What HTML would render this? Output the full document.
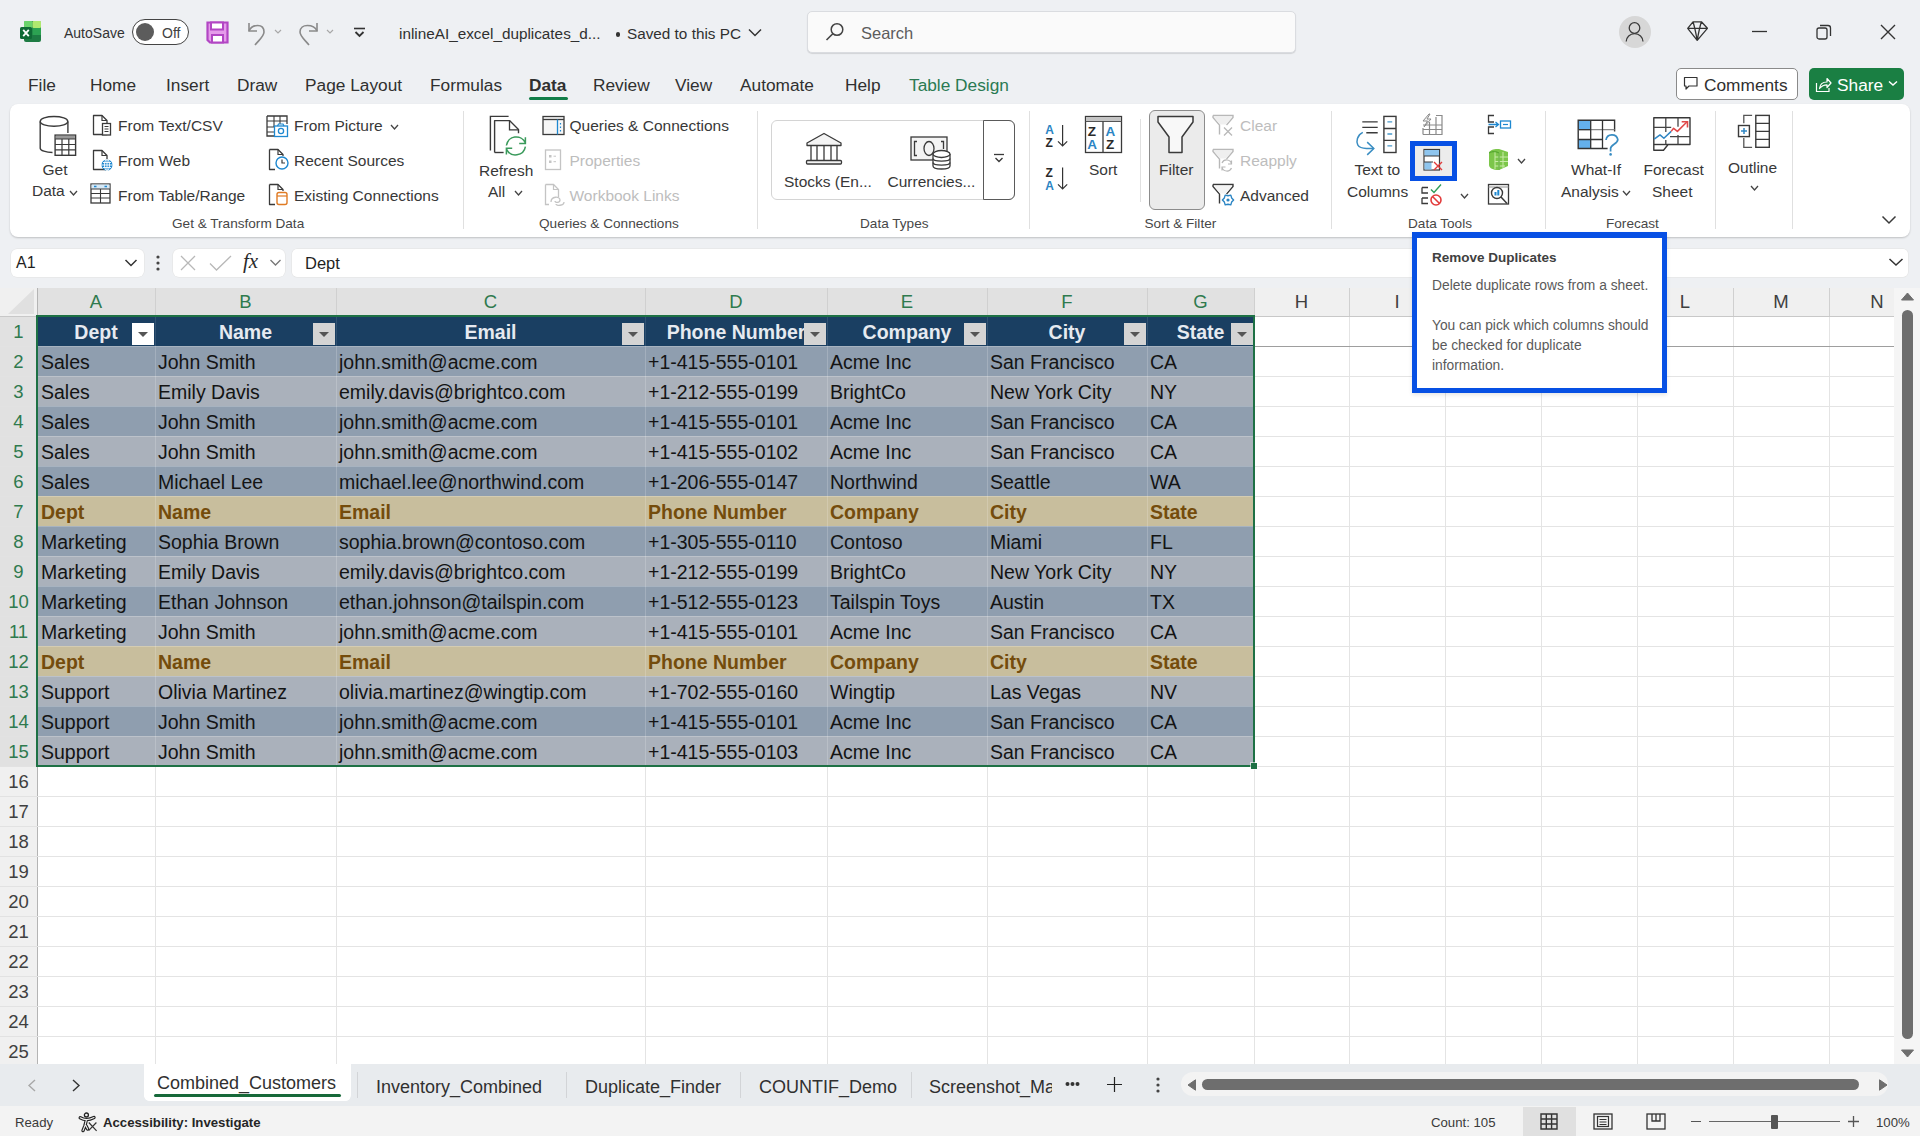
<!DOCTYPE html><html><head><meta charset="utf-8"><style>
*{margin:0;padding:0;box-sizing:border-box}
html,body{width:1920px;height:1136px;overflow:hidden;background:#EEF0F3;font-family:"Liberation Sans",sans-serif;color:#242424}
.a{position:absolute;white-space:nowrap}
svg{position:absolute;overflow:visible}
</style></head><body>

<svg style="left:20px;top:21px;" width="22" height="22" viewBox="0 0 22 22">
<rect x="4" y="0" width="17" height="21" rx="2" fill="#1D7B43"/>
<rect x="4" y="0" width="8.5" height="7" rx="1" fill="#6BD36C"/>
<rect x="12.5" y="0" width="8.5" height="7" rx="1" fill="#B0E96F"/>
<rect x="12.5" y="7" width="8.5" height="7" fill="#2CA252"/>
<rect x="0" y="6" width="12" height="12" rx="1.5" fill="#0F6A35"/>
<path d="M3.2 8.8 L8.8 15.2 M8.8 8.8 L3.2 15.2" stroke="#fff" stroke-width="1.8"/>
</svg>
<div class="a" style="left:64px;top:26px;font-size:14px;line-height:14px;color:#333333;font-weight:normal;">AutoSave</div>
<div class="a" style="left:132px;top:19px;width:57px;height:26px;border:1.5px solid #444;border-radius:13px;background:#fff"></div>
<div class="a" style="left:136px;top:23px;width:18px;height:18px;border-radius:9px;background:#5c5c5c"></div>
<div class="a" style="left:162px;top:26px;font-size:14px;line-height:14px;color:#424242;font-weight:normal;">Off</div>
<svg style="left:206px;top:21px;" width="24" height="24" viewBox="0 0 24 24">
<path d="M1.5 1.5 H21.5 V21.5 H4 L1.5 19 Z" fill="#E59CEA" stroke="#B246C4" stroke-width="2.2"/>
<rect x="5" y="1.5" width="12" height="7" fill="#fff" stroke="#B246C4" stroke-width="2"/>
<rect x="6" y="14" width="11" height="7.5" fill="#fff" stroke="#B246C4" stroke-width="2"/>
</svg>
<svg style="left:246px;top:20px;" width="24" height="26" viewBox="0 0 24 26"><path d="M3 3 V11 H11" fill="none" stroke="#8a8a8a" stroke-width="1.6"/><path d="M3 11 C6 4 18 3 18 12 C18 16 14 19 9 25" fill="none" stroke="#8a8a8a" stroke-width="1.6"/></svg>
<svg style="left:274px;top:29px;" width="8" height="6" viewBox="0 0 8 6"><path d="M1 1 L4 4 L7 1" fill="none" stroke="#a8a8a8" stroke-width="1.2"/></svg>
<svg style="left:298px;top:20px;" width="24" height="26" viewBox="0 0 24 26"><path d="M19 3 V11 H11" fill="none" stroke="#8a8a8a" stroke-width="1.6"/><path d="M19 11 C16 4 2 3 2 12 C2 16 6 19 11 25" fill="none" stroke="#8a8a8a" stroke-width="1.6"/></svg>
<svg style="left:326px;top:29px;" width="8" height="6" viewBox="0 0 8 6"><path d="M1 1 L4 4 L7 1" fill="none" stroke="#a8a8a8" stroke-width="1.2"/></svg>
<svg style="left:353px;top:27px;" width="14" height="12" viewBox="0 0 14 12"><path d="M1 1.5 H12" stroke="#333" stroke-width="1.6"/><path d="M2.5 5 L6.5 9 L10.5 5" fill="none" stroke="#333" stroke-width="1.8"/></svg>
<div class="a" style="left:399px;top:26px;font-size:15.3px;line-height:15.3px;color:#303030;font-weight:normal;">inlineAI_excel_duplicates_d...</div>
<div class="a" style="left:615.5px;top:32px;width:4.5px;height:4.5px;border-radius:3px;background:#333"></div>
<div class="a" style="left:627px;top:26px;font-size:15.3px;line-height:15.3px;color:#303030;font-weight:normal;">Saved to this PC</div>
<svg style="left:748px;top:28px;" width="14" height="10" viewBox="0 0 14 10"><path d="M1 1.5 L7 7.5 L13 1.5" fill="none" stroke="#333" stroke-width="1.5"/></svg>
<div class="a" style="left:807px;top:11px;width:489px;height:42px;background:#FAFAFA;border:1px solid #DADCE0;border-radius:5px;box-shadow:0 1px 1px rgba(0,0,0,0.12)"></div>
<svg style="left:825px;top:22px;" width="20" height="20" viewBox="0 0 20 20"><circle cx="12" cy="7.5" r="5.8" fill="none" stroke="#444" stroke-width="1.5"/><path d="M7.8 11.7 L1.5 18" stroke="#444" stroke-width="1.6"/></svg>
<div class="a" style="left:861px;top:25px;font-size:16.5px;line-height:16.5px;color:#5c5c5c;font-weight:normal;">Search</div>
<div class="a" style="left:1619px;top:16px;width:32px;height:32px;border-radius:16px;background:#D7D7D7"></div>
<svg style="left:1625px;top:22px;" width="20" height="20" viewBox="0 0 20 20"><circle cx="9.5" cy="6" r="5.3" fill="none" stroke="#3a3a3a" stroke-width="1.25"/><path d="M1.2 19.6 A8.4 8 0 0 1 18 19.6" fill="none" stroke="#3a3a3a" stroke-width="1.25"/></svg>
<svg style="left:1687px;top:21px;" width="22" height="21" viewBox="0 0 22 21"><path d="M0.7 7.3 L6 0.8 H14.4 L20.4 7.3 L10.2 19.4 Z M0.7 7.3 H20.4 M6 0.8 Q8 7 10.2 19.4 M14.4 0.8 Q12.4 7 10.2 19.4" fill="none" stroke="#333" stroke-width="1.3" stroke-linejoin="round"/></svg>
<svg style="left:1752px;top:30px;" width="16" height="3" viewBox="0 0 16 3"><path d="M0 1.5 H15" stroke="#333" stroke-width="1.3"/></svg>
<svg style="left:1816px;top:24px;" width="16" height="16" viewBox="0 0 16 16"><rect x="1" y="4" width="10" height="11" rx="2" fill="none" stroke="#333" stroke-width="1.3"/><path d="M4 1.5 H12 Q14.5 1.5 14.5 4 V12" fill="none" stroke="#333" stroke-width="1.3"/></svg>
<svg style="left:1880px;top:24px;" width="16" height="16" viewBox="0 0 16 16"><path d="M1 1 L15 15 M15 1 L1 15" stroke="#333" stroke-width="1.4"/></svg>
<div class="a" style="left:28px;top:77px;font-size:17.3px;line-height:17.3px;color:#303030;font-weight:normal;">File</div>
<div class="a" style="left:90px;top:77px;font-size:17.3px;line-height:17.3px;color:#303030;font-weight:normal;">Home</div>
<div class="a" style="left:166px;top:77px;font-size:17.3px;line-height:17.3px;color:#303030;font-weight:normal;">Insert</div>
<div class="a" style="left:237px;top:77px;font-size:17.3px;line-height:17.3px;color:#303030;font-weight:normal;">Draw</div>
<div class="a" style="left:305px;top:77px;font-size:17.3px;line-height:17.3px;color:#303030;font-weight:normal;">Page Layout</div>
<div class="a" style="left:430px;top:77px;font-size:17.3px;line-height:17.3px;color:#303030;font-weight:normal;">Formulas</div>
<div class="a" style="left:529px;top:77px;font-size:17.3px;line-height:17.3px;color:#303030;font-weight:bold;">Data</div>
<div class="a" style="left:593px;top:77px;font-size:17.3px;line-height:17.3px;color:#303030;font-weight:normal;">Review</div>
<div class="a" style="left:675px;top:77px;font-size:17.3px;line-height:17.3px;color:#303030;font-weight:normal;">View</div>
<div class="a" style="left:740px;top:77px;font-size:17.3px;line-height:17.3px;color:#303030;font-weight:normal;">Automate</div>
<div class="a" style="left:845px;top:77px;font-size:17.3px;line-height:17.3px;color:#303030;font-weight:normal;">Help</div>
<div class="a" style="left:909px;top:77px;font-size:17.3px;line-height:17.3px;color:#2A7A52;font-weight:normal;">Table Design</div>
<div class="a" style="left:529px;top:97px;width:39px;height:3px;background:#117D48;border-radius:2px"></div>
<div class="a" style="left:1676px;top:68px;width:122px;height:32px;border:1px solid #8a8a8a;border-radius:5px;background:#fff"></div>
<svg style="left:1683px;top:76px;" width="16" height="16" viewBox="0 0 16 16"><path d="M1.5 1.5 H14 V10 H6 L3 13 V10 H1.5 Z" fill="none" stroke="#333" stroke-width="1.2" stroke-linejoin="round"/></svg>
<div class="a" style="left:1704px;top:76.5px;font-size:17.3px;line-height:17.3px;color:#303030;font-weight:normal;">Comments</div>
<div class="a" style="left:1809px;top:68px;width:95px;height:32px;border-radius:5px;background:#1A7F43"></div>
<svg style="left:1815px;top:75px;" width="17" height="18" viewBox="0 0 17 18"><path d="M1.5 8 V16.5 H14 V13" fill="none" stroke="#fff" stroke-width="1.2"/><path d="M4.5 13.5 C5 9 8 7 12 7 V3.5 L16 8 L12 12.5 V9.8 C9 9.8 6.5 11 4.5 13.5 Z" fill="none" stroke="#fff" stroke-width="1.2" stroke-linejoin="round"/></svg>
<div class="a" style="left:1837px;top:76.5px;font-size:17.3px;line-height:17.3px;color:#fff;font-weight:normal;">Share</div>
<svg style="left:1888px;top:80px;" width="10" height="7" viewBox="0 0 10 7"><path d="M1 1.5 L5 5 L9 1.5" fill="none" stroke="#fff" stroke-width="1.5"/></svg>
<div class="a" style="left:10px;top:104px;width:1900px;height:133px;background:#fff;border-radius:8px;box-shadow:0 1px 2px rgba(0,0,0,0.20)"></div>
<svg style="left:38px;top:114px;" width="40" height="44" viewBox="0 0 40 44">
<path d="M2.2 7.4 V34.2 C2.2 36.5 8 38.5 14.5 38.5" fill="#fff" stroke="#3a3a3a" stroke-width="1.4"/>
<path d="M29.9 7.4 V18.9" fill="none" stroke="#3a3a3a" stroke-width="1.4"/>
<ellipse cx="16" cy="7.4" rx="13.8" ry="4.9" fill="#fff" stroke="#3a3a3a" stroke-width="1.4"/>
<rect x="17.1" y="21.1" width="20.5" height="20.2" fill="#fff" stroke="#3a3a3a" stroke-width="1.4"/>
<rect x="17.8" y="21.8" width="19.1" height="3.2" fill="#999"/>
<path d="M17.1 25 H37.6 M17.1 30.5 H37.6 M17.1 35.8 H37.6 M24 25 V41.3 M30.8 25 V41.3" stroke="#3a3a3a" stroke-width="1.2"/>
</svg>
<div class="a" style="left:42.5px;top:162.0px;font-size:15.5px;line-height:15.5px;color:#383838;font-weight:normal;">Get</div>
<div class="a" style="left:32px;top:183.0px;font-size:15.5px;line-height:15.5px;color:#383838;font-weight:normal;">Data</div>
<svg style="left:69px;top:190px;" width="9" height="6" viewBox="0 0 9 6"><path d="M1 1 L4.5 5 L8 1" fill="none" stroke="#444" stroke-width="1.3"/></svg>
<svg style="left:92px;top:114px;" width="22" height="24" viewBox="0 0 22 24"><path d="M1.5 1.5 H10 L15 6.5 V20.5 H1.5 Z" fill="#fff" stroke="#3a3a3a" stroke-width="1.3" stroke-linejoin="round"/><path d="M10 1.5 V6.5 H15" fill="none" stroke="#3a3a3a" stroke-width="1.2"/><rect x="10.5" y="9.5" width="8" height="11.5" fill="#fff" stroke="#3a3a3a" stroke-width="1.3"/><path d="M12.5 12.5 H16.5 M12.5 15 H16.5 M12.5 17.5 H16.5" stroke="#3a3a3a" stroke-width="1"/></svg>
<div class="a" style="left:118px;top:117.5px;font-size:15.5px;line-height:15.5px;color:#383838;font-weight:normal;">From Text/CSV</div>
<svg style="left:92px;top:149px;" width="22" height="24" viewBox="0 0 22 24"><path d="M1.5 1.5 H10 L15 6.5 V20.5 H1.5 Z" fill="#fff" stroke="#3a3a3a" stroke-width="1.3" stroke-linejoin="round"/><path d="M10 1.5 V6.5 H15" fill="none" stroke="#3a3a3a" stroke-width="1.2"/><circle cx="15" cy="16" r="5.5" fill="#1E88D0"/><path d="M9.5 16 H20.5 M15 10.5 V21.5 M11 13.5 H19 M11 18.5 H19" stroke="#fff" stroke-width="0.9"/><ellipse cx="15" cy="16" rx="2.5" ry="5.5" fill="none" stroke="#fff" stroke-width="0.9"/></svg>
<div class="a" style="left:118px;top:152.5px;font-size:15.5px;line-height:15.5px;color:#383838;font-weight:normal;">From Web</div>
<svg style="left:90px;top:183px;" width="22" height="22" viewBox="0 0 22 22"><rect x="1" y="1" width="19" height="19" fill="#fff" stroke="#3a3a3a" stroke-width="1.3"/><rect x="1.5" y="1.5" width="18" height="4.5" fill="#D6E9F7"/>
<path d="M1 6 H20 M1 10.5 H20 M1 15 H20 M10.5 6 V20" stroke="#3a3a3a" stroke-width="1.1"/><path d="M4 3.5 H6.5 M14.5 3.5 H17" stroke="#1E88D0" stroke-width="1.4"/></svg>
<div class="a" style="left:118px;top:187.5px;font-size:15.5px;line-height:15.5px;color:#383838;font-weight:normal;">From Table/Range</div>
<svg style="left:266px;top:115px;" width="24" height="23" viewBox="0 0 24 23"><path d="M1 1 H21 V9 M1 1 V21 H8" fill="none" stroke="#3a3a3a" stroke-width="1.3"/><path d="M1 6 H21 M1 12 H8 M1 17 H8 M8 1 V12 M14 1 V9" stroke="#3a3a3a" stroke-width="1.1"/>
<rect x="8.5" y="11" width="13" height="10.5" fill="#fff" stroke="#1E88D0" stroke-width="1.3"/><path d="M11.5 11 L12.5 9 H17 L18 11" fill="none" stroke="#1E88D0" stroke-width="1.2"/><circle cx="15" cy="16" r="2.6" fill="none" stroke="#1E88D0" stroke-width="1.3"/></svg>
<div class="a" style="left:294px;top:117.5px;font-size:15.5px;line-height:15.5px;color:#383838;font-weight:normal;">From Picture</div>
<svg style="left:390px;top:124px;" width="9" height="6" viewBox="0 0 9 6"><path d="M1 1 L4.5 5 L8 1" fill="none" stroke="#444" stroke-width="1.3"/></svg>
<svg style="left:268px;top:148px;" width="24" height="24" viewBox="0 0 24 24"><path d="M1.5 1.5 H10 L15 6.5 V8 M1.5 1.5 V21.5 H7" fill="#fff" stroke="#3a3a3a" stroke-width="1.3" stroke-linejoin="round"/><path d="M10 1.5 V6.5 H15" fill="none" stroke="#3a3a3a" stroke-width="1.2"/>
<circle cx="14" cy="15" r="6" fill="#fff" stroke="#1E88D0" stroke-width="1.4"/><path d="M14 11.5 V15 H17" fill="none" stroke="#3a3a3a" stroke-width="1.2"/></svg>
<div class="a" style="left:294px;top:152.5px;font-size:15.5px;line-height:15.5px;color:#383838;font-weight:normal;">Recent Sources</div>
<svg style="left:268px;top:183px;" width="24" height="24" viewBox="0 0 24 24"><path d="M1.5 1.5 H10 L15 6.5 V8 M1.5 1.5 V21.5 H7" fill="#fff" stroke="#3a3a3a" stroke-width="1.3" stroke-linejoin="round"/><path d="M10 1.5 V6.5 H15" fill="none" stroke="#3a3a3a" stroke-width="1.2"/>
<rect x="9" y="9.5" width="10" height="12" rx="2" fill="#fff" stroke="#E07B24" stroke-width="1.4"/><path d="M9 13 H19" stroke="#E07B24" stroke-width="1.2"/></svg>
<div class="a" style="left:294px;top:187.5px;font-size:15.5px;line-height:15.5px;color:#383838;font-weight:normal;">Existing Connections</div>
<div class="a" style="left:172px;top:216.7px;font-size:13.6px;line-height:13.6px;color:#474747;font-weight:normal;">Get &amp; Transform Data</div>
<div class="a" style="left:463px;top:111px;width:1px;height:118px;background:#E0E0E0"></div>
<svg style="left:488px;top:115px;" width="42" height="44" viewBox="0 0 42 44"><path d="M2.4 35.5 V1.4 H20.6" fill="none" stroke="#3a3a3a" stroke-width="1.4"/>
<path d="M6.6 37.5 V5.6 H21.5 L30.5 14.4 V18.3" fill="#fff" stroke="#3a3a3a" stroke-width="1.4" stroke-linejoin="round"/><path d="M6.6 37.5 H15.6" stroke="#3a3a3a" stroke-width="1.4"/><path d="M21.5 5.6 V14.8 H30.5" fill="none" stroke="#3a3a3a" stroke-width="1.3"/>
<path d="M18.4 30.5 A10 10 0 0 1 37.3 27.6" fill="none" stroke="#3A9A5B" stroke-width="1.5"/><path d="M37.4 22.3 V28.5 H31.2" fill="none" stroke="#3A9A5B" stroke-width="1.5"/>
<path d="M37.4 31.6 A10 10 0 0 1 18.6 34.4" fill="none" stroke="#3A9A5B" stroke-width="1.5"/><path d="M18.4 39.5 V33.3 H24.2" fill="none" stroke="#3A9A5B" stroke-width="1.5"/></svg>
<div class="a" style="left:479px;top:163.0px;font-size:15.5px;line-height:15.5px;color:#383838;font-weight:normal;">Refresh</div>
<div class="a" style="left:488px;top:184.3px;font-size:15.5px;line-height:15.5px;color:#383838;font-weight:normal;">All</div>
<svg style="left:514px;top:190px;" width="9" height="6" viewBox="0 0 9 6"><path d="M1 1 L4.5 5 L8 1" fill="none" stroke="#444" stroke-width="1.3"/></svg>
<svg style="left:542px;top:115px;" width="24" height="22" viewBox="0 0 24 22"><rect x="1" y="1.5" width="21" height="18" fill="#F6F6F6" stroke="#3a3a3a" stroke-width="1.3"/><path d="M1 4.5 H22" stroke="#3a3a3a" stroke-width="1.3"/><path d="M15.5 4.5 V19.5" stroke="#1E88D0" stroke-width="1.3"/><path d="M18.5 8 V9.5 M18.5 11.5 V13 M18.5 15 V16.5" stroke="#1E88D0" stroke-width="1.2"/></svg>
<div class="a" style="left:569.5px;top:117.5px;font-size:15.5px;line-height:15.5px;color:#383838;font-weight:normal;">Queries &amp; Connections</div>
<svg style="left:544px;top:148px;" width="20" height="24" viewBox="0 0 20 24"><rect x="1.5" y="2" width="15" height="19.5" fill="#fff" stroke="#c4c4c4" stroke-width="1.3"/><rect x="5" y="7" width="2.5" height="2.5" fill="#c4c4c4"/><rect x="5" y="12.5" width="2.5" height="2.5" fill="#c4c4c4"/><path d="M9.5 8.2 H12 M9.5 13.7 H12" stroke="#c4c4c4" stroke-width="1"/></svg>
<div class="a" style="left:569.5px;top:152.5px;font-size:15.5px;line-height:15.5px;color:#BDBDBD;font-weight:normal;">Properties</div>
<svg style="left:544px;top:183px;" width="22" height="24" viewBox="0 0 22 24"><path d="M1.5 1.5 H9.5 L14.5 6.5 V14 M1.5 1.5 V21.5 H5" fill="#fff" stroke="#c4c4c4" stroke-width="1.3"/><path d="M9.5 1.5 V6.5 H14.5" fill="none" stroke="#c4c4c4" stroke-width="1.2"/><path d="M7 19 C7 13 16 13 16 17 C16 20 11 20 11 18 M12 21 C12 23 20 23 20 19" fill="none" stroke="#c4c4c4" stroke-width="1.3"/></svg>
<div class="a" style="left:569.5px;top:187.5px;font-size:15.5px;line-height:15.5px;color:#BDBDBD;font-weight:normal;">Workbook Links</div>
<div class="a" style="left:539px;top:216.7px;font-size:13.6px;line-height:13.6px;color:#474747;font-weight:normal;">Queries &amp; Connections</div>
<div class="a" style="left:757px;top:111px;width:1px;height:118px;background:#E0E0E0"></div>
<div class="a" style="left:771px;top:120px;width:244px;height:80px;border:1px solid #D4D4D4;border-radius:6px;background:#fff"></div>
<div class="a" style="left:983px;top:120px;width:32px;height:80px;border:1px solid #5a5a5a;border-radius:0 6px 6px 0"></div>
<svg style="left:805px;top:132px;" width="40" height="36" viewBox="0 0 40 36"><path d="M2 11 L19 1.5 L36 11 V13.5 H2 Z" fill="#F4F4F4" stroke="#3a3a3a" stroke-width="1.3" stroke-linejoin="round"/>
<path d="M6 13.5 V28 M12 13.5 V28 M19 13.5 V28 M26 13.5 V28 M32 13.5 V28" stroke="#3a3a3a" stroke-width="1.3"/>
<rect x="1.5" y="28.5" width="35" height="3.5" rx="1" fill="#F4F4F4" stroke="#3a3a3a" stroke-width="1.3"/></svg>
<div class="a" style="left:784px;top:174.0px;font-size:15.5px;line-height:15.5px;color:#383838;font-weight:normal;">Stocks (En...</div>
<svg style="left:910px;top:136px;" width="44" height="36" viewBox="0 0 44 36"><rect x="1" y="1" width="36" height="23" fill="#F4F4F4" stroke="#3a3a3a" stroke-width="1.3"/>
<path d="M7 5.5 H4.5 V19.5 H7 M31 5.5 H33.5 V13" fill="none" stroke="#3a3a3a" stroke-width="1.3"/><ellipse cx="19" cy="12.5" rx="5" ry="7" fill="none" stroke="#3a3a3a" stroke-width="1.3"/>
<path d="M23 18 V30 C23 34 40 34 40 30 V18" fill="#fff" stroke="#3a3a3a" stroke-width="1.3"/><ellipse cx="31.5" cy="18" rx="8.5" ry="3.5" fill="#fff" stroke="#3a3a3a" stroke-width="1.3"/>
<path d="M23 22.5 C23 26 40 26 40 22.5 M23 26.5 C23 30 40 30 40 26.5" fill="none" stroke="#3a3a3a" stroke-width="1.3"/></svg>
<div class="a" style="left:887.5px;top:174.0px;font-size:15.5px;line-height:15.5px;color:#383838;font-weight:normal;">Currencies...</div>
<svg style="left:993px;top:153px;" width="12" height="11" viewBox="0 0 12 11"><path d="M1 1.5 H11" stroke="#3a3a3a" stroke-width="1.3"/><path d="M2.5 5 L6 8.5 L9.5 5" fill="none" stroke="#3a3a3a" stroke-width="1.4"/></svg>
<div class="a" style="left:860px;top:216.7px;font-size:13.6px;line-height:13.6px;color:#474747;font-weight:normal;">Data Types</div>
<div class="a" style="left:1029px;top:111px;width:1px;height:118px;background:#E0E0E0"></div>
<svg style="left:1044px;top:122px;" width="28" height="28" viewBox="0 0 28 28"><text x="1.2" y="12.3" font-family="Liberation Sans" font-weight="bold" font-size="12" fill="#2B85C4">A</text><text x="1.6" y="24.8" font-family="Liberation Sans" font-weight="bold" font-size="12" fill="#2a2a2a">Z</text>
<path d="M18.6 3 V24 M14 19.4 L18.6 24 L23.2 19.4" fill="none" stroke="#333" stroke-width="1.2"/></svg>
<svg style="left:1044px;top:166px;" width="28" height="28" viewBox="0 0 28 28"><text x="1.6" y="11.3" font-family="Liberation Sans" font-weight="bold" font-size="12" fill="#2a2a2a">Z</text><text x="1.2" y="23.8" font-family="Liberation Sans" font-weight="bold" font-size="12" fill="#2B85C4">A</text>
<path d="M18.6 1.5 V23 M14 18.4 L18.6 23 L23.2 18.4" fill="none" stroke="#333" stroke-width="1.2"/></svg>
<svg style="left:1084px;top:115px;" width="40" height="40" viewBox="0 0 40 40"><rect x="1.5" y="1.5" width="36" height="36" fill="#fff" stroke="#3a3a3a" stroke-width="1.3"/><rect x="2" y="2" width="35" height="4.5" fill="#C4C4C4"/><path d="M1.5 6.5 H37.5" stroke="#555" stroke-width="1"/><path d="M19 6.5 V37.5" stroke="#3a3a3a" stroke-width="1.3"/>
<text x="3.8" y="20.5" font-family="Liberation Sans" font-weight="bold" font-size="13.5" fill="#2a2a2a">Z</text><text x="3.3" y="34" font-family="Liberation Sans" font-weight="bold" font-size="13.5" fill="#2B85C4">A</text>
<text x="21.6" y="20.5" font-family="Liberation Sans" font-weight="bold" font-size="13.5" fill="#2B85C4">A</text><text x="22.1" y="34" font-family="Liberation Sans" font-weight="bold" font-size="13.5" fill="#2a2a2a">Z</text></svg>
<div class="a" style="left:1089px;top:162.0px;font-size:15.5px;line-height:15.5px;color:#383838;font-weight:normal;">Sort</div>
<div class="a" style="left:1140px;top:119px;width:1px;height:83px;background:#E0E0E0"></div>
<div class="a" style="left:1149px;top:110px;width:56px;height:100px;background:#EBEBEB;border:1px solid #8C8C8C;border-radius:6px"></div>
<svg style="left:1156px;top:115px;" width="40" height="40" viewBox="0 0 40 40"><path d="M2 1.5 H37 V7 L26 22 V37.5 H13 V22 L2 7 Z" fill="#F8F8F8" stroke="#3a3a3a" stroke-width="1.5" stroke-linejoin="round"/></svg>
<div class="a" style="left:1159px;top:162.0px;font-size:15.5px;line-height:15.5px;color:#383838;font-weight:normal;">Filter</div>
<svg style="left:1212px;top:114px;" width="24" height="24" viewBox="0 0 24 24"><path d="M1 1.5 H21 V3.5 L14.5 11 M1 1.5 V3.5 L7.5 11 V20.5" fill="none" stroke="#b8b8b8" stroke-width="1.4"/><path d="M2 2.5 H20 V3.3 L14 10.5 H8 L2 3.3 Z" fill="#EFEFEF"/><path d="M12 13.5 L20 21.5 M20 13.5 L12 21.5" stroke="#b8b8b8" stroke-width="1.3"/></svg>
<div class="a" style="left:1240px;top:118.0px;font-size:15.5px;line-height:15.5px;color:#BDBDBD;font-weight:normal;">Clear</div>
<svg style="left:1212px;top:148px;" width="24" height="24" viewBox="0 0 24 24"><path d="M1 1.5 H21 V3.5 L14.5 11 M1 1.5 V3.5 L7.5 11 V20.5" fill="none" stroke="#b8b8b8" stroke-width="1.4"/><path d="M2 2.5 H20 V3.3 L14 10.5 H8 L2 3.3 Z" fill="#EFEFEF"/><path d="M19.5 16 A5 5 0 0 0 10 15 M10 19 A5 5 0 0 0 19.5 20 M19.5 12.5 V16 H16 M10 22.5 V19 H13.5" fill="none" stroke="#b8b8b8" stroke-width="1.2"/></svg>
<div class="a" style="left:1240px;top:152.5px;font-size:15.5px;line-height:15.5px;color:#BDBDBD;font-weight:normal;">Reapply</div>
<svg style="left:1212px;top:183px;" width="24" height="24" viewBox="0 0 24 24"><path d="M1 1.5 H21 V3.5 L14.5 11 M1 1.5 V3.5 L7.5 11 V20.5" fill="none" stroke="#3a3a3a" stroke-width="1.4"/><path d="M2 2.5 H20 V3.3 L14 10.5 H8 L2 3.3 Z" fill="#F4F4F4"/><path d="M21.60 17.00 L19.64 19.10 L18.80 21.85 L16.00 21.20 L13.20 21.85 L12.36 19.10 L10.40 17.00 L12.36 14.90 L13.20 12.15 L16.00 12.80 L18.80 12.15 L19.64 14.90 Z" fill="#fff" stroke="#2B85C4" stroke-width="1.4" stroke-linejoin="round"/><circle cx="16" cy="17" r="1.6" fill="#2B85C4"/></svg>
<div class="a" style="left:1240px;top:187.5px;font-size:15.5px;line-height:15.5px;color:#383838;font-weight:normal;">Advanced</div>
<div class="a" style="left:1144.5px;top:216.7px;font-size:13.6px;line-height:13.6px;color:#474747;font-weight:normal;">Sort &amp; Filter</div>
<div class="a" style="left:1331px;top:111px;width:1px;height:118px;background:#E0E0E0"></div>
<svg style="left:1354px;top:115px;" width="46" height="44" viewBox="0 0 46 44"><path d="M8.3 6.9 H23.7 M8.3 12.4 H23.7 M12.3 17.7 H23.7" stroke="#3a3a3a" stroke-width="1.4"/>
<rect x="29.9" y="1.4" width="12.1" height="36.1" fill="#fff" stroke="#3a3a3a" stroke-width="1.4"/><path d="M29.9 13.5 H42 M29.9 25.4 H42" stroke="#3a3a3a" stroke-width="1.3"/><path d="M33.4 6.9 H38.2 M33.4 19 H38.2 M33.4 30.9 H38.2" stroke="#4A9ACB" stroke-width="1.3"/>
<path d="M8.8 17.4 C3 20 2 27 3.8 30 C5.5 33 8.5 33.4 12.5 33.4 H19.6" fill="none" stroke="#3A8DC2" stroke-width="1.5"/><path d="M13.2 27.1 L19.8 33.5 L13.2 39.9" fill="none" stroke="#3A8DC2" stroke-width="1.5"/></svg>
<div class="a" style="left:1354.5px;top:162.0px;font-size:15.5px;line-height:15.5px;color:#383838;font-weight:normal;">Text to</div>
<div class="a" style="left:1347px;top:183.5px;font-size:15.5px;line-height:15.5px;color:#383838;font-weight:normal;">Columns</div>
<svg style="left:1420px;top:113px;" width="24" height="24" viewBox="0 0 24 24"><path d="M3 21.5 H22 V2.5 H16 M3 21.5 V15 M3 12 H22 M3 16.5 H22 M9.5 9 V21.5 M16 4 V21.5" fill="none" stroke="#8a8a8a" stroke-width="1.2"/><path d="M9 1 L3 8 H7.5 L4 14 L11 6 H7 L10 1 Z" fill="#F4F4F4" stroke="#8a8a8a" stroke-width="1"/></svg>
<div class="a" style="left:1410px;top:141px;width:47px;height:40px;border:5px solid #0750E4;background:#ECECEC"></div>
<svg style="left:1422px;top:148px;" width="24" height="24" viewBox="0 0 24 24"><rect x="2" y="1.5" width="15.5" height="20.5" fill="#fff" stroke="#3a3a3a" stroke-width="1.2"/><rect x="2.5" y="2" width="14.5" height="6" fill="#8EC5EE"/><rect x="2.5" y="14" width="7" height="7.5" fill="#8EC5EE"/><path d="M2 8 H17.5 M2 14 H11" stroke="#3a3a3a" stroke-width="1.1"/>
<path d="M12 14 L20 22 M20 14 L12 22" stroke="#E23C3C" stroke-width="1.4"/></svg>
<svg style="left:1420px;top:183px;" width="24" height="24" viewBox="0 0 24 24"><path d="M2 4.5 H8 M2 4.5 V10 H8 M2 15 H8 M2 15 V20.5 H8" fill="none" stroke="#3a3a3a" stroke-width="1.3"/><path d="M11 6.5 L14 9.5 L21 1.5" fill="none" stroke="#2E9D5A" stroke-width="1.4"/>
<circle cx="16" cy="17" r="5" fill="#fff" stroke="#E23C3C" stroke-width="1.6"/><path d="M12.5 13.5 L19.5 20.5" stroke="#E23C3C" stroke-width="1.6"/></svg>
<svg style="left:1460px;top:193px;" width="9" height="6" viewBox="0 0 9 6"><path d="M1 1 L4.5 5 L8 1" fill="none" stroke="#444" stroke-width="1.3"/></svg>
<svg style="left:1487px;top:114px;" width="26" height="22" viewBox="0 0 26 22"><path d="M7 1.5 H1.5 V8 H7 M7 13 H1.5 V19.5 H7" fill="none" stroke="#3a3a3a" stroke-width="1.3"/><path d="M1.5 10.5 H11 M8.5 8 L11.5 10.5 L8.5 13" fill="none" stroke="#1E88D0" stroke-width="1.3"/><rect x="13.5" y="7" width="10" height="7" fill="#fff" stroke="#1E88D0" stroke-width="1.3"/><path d="M16 10.5 H21" stroke="#1E88D0" stroke-width="1.2"/></svg>
<svg style="left:1487px;top:148px;" width="24" height="24" viewBox="0 0 24 24"><path d="M2 5 C2 2 8 0.5 12 1 L21 4 V18 L12 22 C6 22 2 20 2 17 Z" fill="#7CC64A"/><path d="M8 4 V21 M12 5 V22 M16 4 V20 M8 9 H21 M8 13.5 H21 M8 18 H18" stroke="#C8EBA7" stroke-width="1"/><path d="M2 5 C5 3 10 3.5 12 5 V22" fill="none" stroke="#4EA02C" stroke-width="1"/></svg>
<svg style="left:1517px;top:158px;" width="9" height="6" viewBox="0 0 9 6"><path d="M1 1 L4.5 5 L8 1" fill="none" stroke="#444" stroke-width="1.3"/></svg>
<svg style="left:1487px;top:183px;" width="24" height="24" viewBox="0 0 24 24"><rect x="1.5" y="1.5" width="20" height="19.5" fill="#fff" stroke="#3a3a3a" stroke-width="1.3"/><path d="M1.5 4 H21.5" stroke="#999" stroke-width="1.1"/>
<circle cx="10" cy="10" r="5.5" fill="#fff" stroke="#3a3a3a" stroke-width="1.4"/><path d="M14 14 L20 20.5" stroke="#3a3a3a" stroke-width="1.5"/><rect x="7.5" y="9" width="2" height="3.5" fill="#1E88D0"/><rect x="10.3" y="7" width="2" height="5.5" fill="#1E88D0"/></svg>
<div class="a" style="left:1408px;top:216.7px;font-size:13.6px;line-height:13.6px;color:#474747;font-weight:normal;">Data Tools</div>
<div class="a" style="left:1545px;top:111px;width:1px;height:118px;background:#E0E0E0"></div>
<svg style="left:1577px;top:119px;" width="44" height="40" viewBox="0 0 44 40"><rect x="1.2" y="1.2" width="12.5" height="9.5" fill="#64B0EC"/><rect x="1.2" y="20.5" width="12.5" height="9" fill="#64B0EC"/>
<path d="M37.6 12.4 V1.2 H1.2 V29.5 H30.6" fill="none" stroke="#333" stroke-width="1.4"/>
<path d="M1.2 10.7 H37.6" stroke="#888" stroke-width="1.3"/><path d="M1.2 10.7 H13.7 M1.2 20.5 H25.5 M13.7 1.2 V29.5 M25.5 1.2 V29.5" stroke="#333" stroke-width="1.3"/>
<path d="M29 21 A6 6 0 0 1 40.8 20.5 C40.8 25 33.6 25.5 33.6 29.5 V32.5" fill="none" stroke="#3A8DC2" stroke-width="1.7"/><circle cx="33.6" cy="35.4" r="1.3" fill="#3A8DC2"/></svg>
<div class="a" style="left:1571px;top:162.0px;font-size:15.5px;line-height:15.5px;color:#383838;font-weight:normal;">What-If</div>
<div class="a" style="left:1561px;top:183.5px;font-size:15.5px;line-height:15.5px;color:#383838;font-weight:normal;">Analysis</div>
<svg style="left:1622px;top:190px;" width="9" height="6" viewBox="0 0 9 6"><path d="M1 1 L4.5 5 L8 1" fill="none" stroke="#444" stroke-width="1.3"/></svg>
<svg style="left:1652px;top:116px;" width="40" height="36" viewBox="0 0 40 36"><path d="M1.8 1.8 H38 V28.5 H16.1 L11.5 34.3 H1.8 Z" fill="#fff" stroke="#383838" stroke-width="1.4" stroke-linejoin="round"/><path d="M1.8 28.5 H16.1" stroke="#383838" stroke-width="1.4"/>
<path d="M1.8 11.3 H19.2 M18 20.6 H38 M13.8 1.8 V16 M13.8 23.9 V28.5 M26 1.8 V10.7 M26 19 V28.5" stroke="#444" stroke-width="1.3"/>
<path d="M2.2 23.1 L8 18.9 L11.9 22.3 L19.2 15.4" fill="none" stroke="#2F86C4" stroke-width="1.5" stroke-linejoin="round"/><path d="M19.2 15.4 L21.6 12.3 L25.4 15.4 L35.1 5.7" fill="none" stroke="#E04848" stroke-width="1.5" stroke-linejoin="round"/><path d="M29.7 5.7 H35.5 V11.5" fill="none" stroke="#E04848" stroke-width="1.6"/></svg>
<div class="a" style="left:1643.5px;top:162.0px;font-size:15.5px;line-height:15.5px;color:#383838;font-weight:normal;">Forecast</div>
<div class="a" style="left:1652px;top:183.5px;font-size:15.5px;line-height:15.5px;color:#383838;font-weight:normal;">Sheet</div>
<div class="a" style="left:1606px;top:216.7px;font-size:13.6px;line-height:13.6px;color:#474747;font-weight:normal;">Forecast</div>
<div class="a" style="left:1715px;top:111px;width:1px;height:118px;background:#E0E0E0"></div>
<svg style="left:1737px;top:113px;" width="36" height="36" viewBox="0 0 36 36"><path d="M15.1 2.4 H6.8 V10.3 M6.8 25.1 V34.3 H15.1" fill="none" stroke="#555" stroke-width="1.3"/>
<rect x="1.5" y="12.5" width="10.9" height="11.1" fill="#fff" stroke="#3a3a3a" stroke-width="1.4"/><path d="M4 18 H10 M7 15 V21" stroke="#2F86C4" stroke-width="1.5"/>
<rect x="18.8" y="2.4" width="13.5" height="31.9" fill="#fff" stroke="#3a3a3a" stroke-width="1.4"/><path d="M18.8 10.3 H32.3 M18.8 18.3 H32.3 M18.8 26.4 H32.3" stroke="#3a3a3a" stroke-width="1.3"/></svg>
<div class="a" style="left:1728px;top:160.0px;font-size:15.5px;line-height:15.5px;color:#383838;font-weight:normal;">Outline</div>
<svg style="left:1749.5px;top:185px;" width="9" height="6" viewBox="0 0 9 6"><path d="M1 1 L4.5 5 L8 1" fill="none" stroke="#444" stroke-width="1.3"/></svg>
<div class="a" style="left:1792px;top:111px;width:1px;height:118px;background:#E0E0E0"></div>
<svg style="left:1881px;top:214.5px;" width="16" height="10" viewBox="0 0 16 10"><path d="M1.5 1.5 L8 8 L14.5 1.5" fill="none" stroke="#3a3a3a" stroke-width="1.5"/></svg>
<div class="a" style="left:11px;top:249px;width:133px;height:28px;background:#fff;border-radius:6px;box-shadow:0 0 0 0.5px #e2e2e2"></div>
<div class="a" style="left:16px;top:255px;font-size:16px;line-height:16px;color:#1f1f1f;font-weight:normal;">A1</div>
<svg style="left:124px;top:258px;" width="14" height="10" viewBox="0 0 14 10"><path d="M1.5 2 L7 7.5 L12.5 2" fill="none" stroke="#333" stroke-width="1.5"/></svg>
<svg style="left:155px;top:255px;" width="6" height="16" viewBox="0 0 6 16"><circle cx="3" cy="2" r="1.6" fill="#444"/><circle cx="3" cy="8" r="1.6" fill="#444"/><circle cx="3" cy="14" r="1.6" fill="#444"/></svg>
<div class="a" style="left:173px;top:249px;width:112px;height:28px;background:#fff;border-radius:6px;box-shadow:0 0 0 0.5px #e2e2e2"></div>
<svg style="left:180px;top:255px;" width="18" height="16" viewBox="0 0 18 16"><path d="M1 1 L15 15 M15 1 L1 15" stroke="#b8b8b8" stroke-width="1.3"/></svg>
<svg style="left:209px;top:255px;" width="24" height="16" viewBox="0 0 24 16"><path d="M1 8.5 L7.5 15 L22 1" fill="none" stroke="#b8b8b8" stroke-width="1.3"/></svg>
<div class="a" style="left:243px;top:251px;font-size:21px;line-height:21px;color:#2a2a2a;font-weight:normal;font-family:'Liberation Serif',serif;letter-spacing:0px"><i>fx</i></div>
<svg style="left:269px;top:258px;" width="14" height="10" viewBox="0 0 14 10"><path d="M1.5 2 L6.5 7 L11.5 2" fill="none" stroke="#777" stroke-width="1.3"/></svg>
<div class="a" style="left:292px;top:249px;width:1616px;height:28px;background:#fff;border-radius:5px;box-shadow:0 0 0 0.5px #e2e2e2"></div>
<div class="a" style="left:305px;top:255px;font-size:16.5px;line-height:16.5px;color:#1f1f1f;font-weight:normal;">Dept</div>
<svg style="left:1888px;top:257px;" width="16" height="10" viewBox="0 0 16 10"><path d="M1.5 2 L8 8 L14.5 2" fill="none" stroke="#333" stroke-width="1.5"/></svg>
<div class="a" style="left:0px;top:288px;width:1920px;height:776px;background:#fff"></div>
<div class="a" style="left:0px;top:288px;width:1894px;height:28px;background:#F0F0F0"></div>
<div class="a" style="left:37px;top:288px;width:1217px;height:28px;background:#E1E1E1"></div>
<div class="a" style="left:0px;top:316px;width:37px;height:748px;background:#F0F0F0"></div>
<div class="a" style="left:0px;top:316px;width:37px;height:450px;background:#E1E1E1"></div>
<svg style="left:0px;top:288px;" width="37" height="29" viewBox="0 0 37 29"><path d="M34 1 V26 H8 Z" fill="#E0E0E0"/></svg>
<div class="a" style="left:155px;top:288px;width:1px;height:28px;background:#D0D0D0"></div>
<div class="a" style="left:155px;top:316px;width:1px;height:748px;background:#E4E4E4"></div>
<div class="a" style="left:336px;top:288px;width:1px;height:28px;background:#D0D0D0"></div>
<div class="a" style="left:336px;top:316px;width:1px;height:748px;background:#E4E4E4"></div>
<div class="a" style="left:645px;top:288px;width:1px;height:28px;background:#D0D0D0"></div>
<div class="a" style="left:645px;top:316px;width:1px;height:748px;background:#E4E4E4"></div>
<div class="a" style="left:827px;top:288px;width:1px;height:28px;background:#D0D0D0"></div>
<div class="a" style="left:827px;top:316px;width:1px;height:748px;background:#E4E4E4"></div>
<div class="a" style="left:987px;top:288px;width:1px;height:28px;background:#D0D0D0"></div>
<div class="a" style="left:987px;top:316px;width:1px;height:748px;background:#E4E4E4"></div>
<div class="a" style="left:1147px;top:288px;width:1px;height:28px;background:#D0D0D0"></div>
<div class="a" style="left:1147px;top:316px;width:1px;height:748px;background:#E4E4E4"></div>
<div class="a" style="left:1254px;top:288px;width:1px;height:28px;background:#D0D0D0"></div>
<div class="a" style="left:1254px;top:316px;width:1px;height:748px;background:#E4E4E4"></div>
<div class="a" style="left:1349px;top:288px;width:1px;height:28px;background:#D0D0D0"></div>
<div class="a" style="left:1349px;top:316px;width:1px;height:748px;background:#E4E4E4"></div>
<div class="a" style="left:1445px;top:288px;width:1px;height:28px;background:#D0D0D0"></div>
<div class="a" style="left:1445px;top:316px;width:1px;height:748px;background:#E4E4E4"></div>
<div class="a" style="left:1541px;top:288px;width:1px;height:28px;background:#D0D0D0"></div>
<div class="a" style="left:1541px;top:316px;width:1px;height:748px;background:#E4E4E4"></div>
<div class="a" style="left:1637px;top:288px;width:1px;height:28px;background:#D0D0D0"></div>
<div class="a" style="left:1637px;top:316px;width:1px;height:748px;background:#E4E4E4"></div>
<div class="a" style="left:1733px;top:288px;width:1px;height:28px;background:#D0D0D0"></div>
<div class="a" style="left:1733px;top:316px;width:1px;height:748px;background:#E4E4E4"></div>
<div class="a" style="left:1829px;top:288px;width:1px;height:28px;background:#D0D0D0"></div>
<div class="a" style="left:1829px;top:316px;width:1px;height:748px;background:#E4E4E4"></div>
<div class="a" style="left:37px;top:288px;width:1px;height:776px;background:#B4B4B4"></div>
<div class="a" style="left:0px;top:316px;width:37px;height:1px;background:#E2E2E2"></div>
<div class="a" style="left:37px;top:316px;width:1857px;height:1px;background:#E4E4E4"></div>
<div class="a" style="left:0px;top:346px;width:37px;height:1px;background:#E2E2E2"></div>
<div class="a" style="left:37px;top:346px;width:1857px;height:1px;background:#E4E4E4"></div>
<div class="a" style="left:0px;top:376px;width:37px;height:1px;background:#E2E2E2"></div>
<div class="a" style="left:37px;top:376px;width:1857px;height:1px;background:#E4E4E4"></div>
<div class="a" style="left:0px;top:406px;width:37px;height:1px;background:#E2E2E2"></div>
<div class="a" style="left:37px;top:406px;width:1857px;height:1px;background:#E4E4E4"></div>
<div class="a" style="left:0px;top:436px;width:37px;height:1px;background:#E2E2E2"></div>
<div class="a" style="left:37px;top:436px;width:1857px;height:1px;background:#E4E4E4"></div>
<div class="a" style="left:0px;top:466px;width:37px;height:1px;background:#E2E2E2"></div>
<div class="a" style="left:37px;top:466px;width:1857px;height:1px;background:#E4E4E4"></div>
<div class="a" style="left:0px;top:496px;width:37px;height:1px;background:#E2E2E2"></div>
<div class="a" style="left:37px;top:496px;width:1857px;height:1px;background:#E4E4E4"></div>
<div class="a" style="left:0px;top:526px;width:37px;height:1px;background:#E2E2E2"></div>
<div class="a" style="left:37px;top:526px;width:1857px;height:1px;background:#E4E4E4"></div>
<div class="a" style="left:0px;top:556px;width:37px;height:1px;background:#E2E2E2"></div>
<div class="a" style="left:37px;top:556px;width:1857px;height:1px;background:#E4E4E4"></div>
<div class="a" style="left:0px;top:586px;width:37px;height:1px;background:#E2E2E2"></div>
<div class="a" style="left:37px;top:586px;width:1857px;height:1px;background:#E4E4E4"></div>
<div class="a" style="left:0px;top:616px;width:37px;height:1px;background:#E2E2E2"></div>
<div class="a" style="left:37px;top:616px;width:1857px;height:1px;background:#E4E4E4"></div>
<div class="a" style="left:0px;top:646px;width:37px;height:1px;background:#E2E2E2"></div>
<div class="a" style="left:37px;top:646px;width:1857px;height:1px;background:#E4E4E4"></div>
<div class="a" style="left:0px;top:676px;width:37px;height:1px;background:#E2E2E2"></div>
<div class="a" style="left:37px;top:676px;width:1857px;height:1px;background:#E4E4E4"></div>
<div class="a" style="left:0px;top:706px;width:37px;height:1px;background:#E2E2E2"></div>
<div class="a" style="left:37px;top:706px;width:1857px;height:1px;background:#E4E4E4"></div>
<div class="a" style="left:0px;top:736px;width:37px;height:1px;background:#E2E2E2"></div>
<div class="a" style="left:37px;top:736px;width:1857px;height:1px;background:#E4E4E4"></div>
<div class="a" style="left:0px;top:766px;width:37px;height:1px;background:#E2E2E2"></div>
<div class="a" style="left:37px;top:766px;width:1857px;height:1px;background:#E4E4E4"></div>
<div class="a" style="left:0px;top:796px;width:37px;height:1px;background:#E2E2E2"></div>
<div class="a" style="left:37px;top:796px;width:1857px;height:1px;background:#E4E4E4"></div>
<div class="a" style="left:0px;top:826px;width:37px;height:1px;background:#E2E2E2"></div>
<div class="a" style="left:37px;top:826px;width:1857px;height:1px;background:#E4E4E4"></div>
<div class="a" style="left:0px;top:856px;width:37px;height:1px;background:#E2E2E2"></div>
<div class="a" style="left:37px;top:856px;width:1857px;height:1px;background:#E4E4E4"></div>
<div class="a" style="left:0px;top:886px;width:37px;height:1px;background:#E2E2E2"></div>
<div class="a" style="left:37px;top:886px;width:1857px;height:1px;background:#E4E4E4"></div>
<div class="a" style="left:0px;top:916px;width:37px;height:1px;background:#E2E2E2"></div>
<div class="a" style="left:37px;top:916px;width:1857px;height:1px;background:#E4E4E4"></div>
<div class="a" style="left:0px;top:946px;width:37px;height:1px;background:#E2E2E2"></div>
<div class="a" style="left:37px;top:946px;width:1857px;height:1px;background:#E4E4E4"></div>
<div class="a" style="left:0px;top:976px;width:37px;height:1px;background:#E2E2E2"></div>
<div class="a" style="left:37px;top:976px;width:1857px;height:1px;background:#E4E4E4"></div>
<div class="a" style="left:0px;top:1006px;width:37px;height:1px;background:#E2E2E2"></div>
<div class="a" style="left:37px;top:1006px;width:1857px;height:1px;background:#E4E4E4"></div>
<div class="a" style="left:0px;top:1036px;width:37px;height:1px;background:#E2E2E2"></div>
<div class="a" style="left:37px;top:1036px;width:1857px;height:1px;background:#E4E4E4"></div>
<div class="a" style="left:0px;top:1066px;width:37px;height:1px;background:#E2E2E2"></div>
<div class="a" style="left:37px;top:1066px;width:1857px;height:1px;background:#E4E4E4"></div>
<div class="a" style="left:0px;top:316px;width:1894px;height:1px;background:#C8C8C8"></div>
<div class="a" style="left:1254px;top:346px;width:640px;height:1px;background:#9E9E9E"></div>
<div class="a" style="left:37px;top:292px;width:118px;text-align:center;font-size:18.5px;line-height:20px;color:#2F7A4E">A</div>
<div class="a" style="left:155px;top:292px;width:181px;text-align:center;font-size:18.5px;line-height:20px;color:#2F7A4E">B</div>
<div class="a" style="left:336px;top:292px;width:309px;text-align:center;font-size:18.5px;line-height:20px;color:#2F7A4E">C</div>
<div class="a" style="left:645px;top:292px;width:182px;text-align:center;font-size:18.5px;line-height:20px;color:#2F7A4E">D</div>
<div class="a" style="left:827px;top:292px;width:160px;text-align:center;font-size:18.5px;line-height:20px;color:#2F7A4E">E</div>
<div class="a" style="left:987px;top:292px;width:160px;text-align:center;font-size:18.5px;line-height:20px;color:#2F7A4E">F</div>
<div class="a" style="left:1147px;top:292px;width:107px;text-align:center;font-size:18.5px;line-height:20px;color:#2F7A4E">G</div>
<div class="a" style="left:1254px;top:292px;width:95px;text-align:center;font-size:18.5px;line-height:20px;color:#3f3f3f">H</div>
<div class="a" style="left:1349px;top:292px;width:96px;text-align:center;font-size:18.5px;line-height:20px;color:#3f3f3f">I</div>
<div class="a" style="left:1445px;top:292px;width:96px;text-align:center;font-size:18.5px;line-height:20px;color:#3f3f3f">J</div>
<div class="a" style="left:1541px;top:292px;width:96px;text-align:center;font-size:18.5px;line-height:20px;color:#3f3f3f">K</div>
<div class="a" style="left:1637px;top:292px;width:96px;text-align:center;font-size:18.5px;line-height:20px;color:#3f3f3f">L</div>
<div class="a" style="left:1733px;top:292px;width:96px;text-align:center;font-size:18.5px;line-height:20px;color:#3f3f3f">M</div>
<div class="a" style="left:1829px;top:292px;width:96px;text-align:center;font-size:18.5px;line-height:20px;color:#3f3f3f">N</div>
<div class="a" style="left:0px;top:322px;width:37px;text-align:center;font-size:18.5px;line-height:20px;color:#2F7A4E">1</div>
<div class="a" style="left:0px;top:352px;width:37px;text-align:center;font-size:18.5px;line-height:20px;color:#2F7A4E">2</div>
<div class="a" style="left:0px;top:382px;width:37px;text-align:center;font-size:18.5px;line-height:20px;color:#2F7A4E">3</div>
<div class="a" style="left:0px;top:412px;width:37px;text-align:center;font-size:18.5px;line-height:20px;color:#2F7A4E">4</div>
<div class="a" style="left:0px;top:442px;width:37px;text-align:center;font-size:18.5px;line-height:20px;color:#2F7A4E">5</div>
<div class="a" style="left:0px;top:472px;width:37px;text-align:center;font-size:18.5px;line-height:20px;color:#2F7A4E">6</div>
<div class="a" style="left:0px;top:502px;width:37px;text-align:center;font-size:18.5px;line-height:20px;color:#2F7A4E">7</div>
<div class="a" style="left:0px;top:532px;width:37px;text-align:center;font-size:18.5px;line-height:20px;color:#2F7A4E">8</div>
<div class="a" style="left:0px;top:562px;width:37px;text-align:center;font-size:18.5px;line-height:20px;color:#2F7A4E">9</div>
<div class="a" style="left:0px;top:592px;width:37px;text-align:center;font-size:18.5px;line-height:20px;color:#2F7A4E">10</div>
<div class="a" style="left:0px;top:622px;width:37px;text-align:center;font-size:18.5px;line-height:20px;color:#2F7A4E">11</div>
<div class="a" style="left:0px;top:652px;width:37px;text-align:center;font-size:18.5px;line-height:20px;color:#2F7A4E">12</div>
<div class="a" style="left:0px;top:682px;width:37px;text-align:center;font-size:18.5px;line-height:20px;color:#2F7A4E">13</div>
<div class="a" style="left:0px;top:712px;width:37px;text-align:center;font-size:18.5px;line-height:20px;color:#2F7A4E">14</div>
<div class="a" style="left:0px;top:742px;width:37px;text-align:center;font-size:18.5px;line-height:20px;color:#2F7A4E">15</div>
<div class="a" style="left:0px;top:772px;width:37px;text-align:center;font-size:18.5px;line-height:20px;color:#3f3f3f">16</div>
<div class="a" style="left:0px;top:802px;width:37px;text-align:center;font-size:18.5px;line-height:20px;color:#3f3f3f">17</div>
<div class="a" style="left:0px;top:832px;width:37px;text-align:center;font-size:18.5px;line-height:20px;color:#3f3f3f">18</div>
<div class="a" style="left:0px;top:862px;width:37px;text-align:center;font-size:18.5px;line-height:20px;color:#3f3f3f">19</div>
<div class="a" style="left:0px;top:892px;width:37px;text-align:center;font-size:18.5px;line-height:20px;color:#3f3f3f">20</div>
<div class="a" style="left:0px;top:922px;width:37px;text-align:center;font-size:18.5px;line-height:20px;color:#3f3f3f">21</div>
<div class="a" style="left:0px;top:952px;width:37px;text-align:center;font-size:18.5px;line-height:20px;color:#3f3f3f">22</div>
<div class="a" style="left:0px;top:982px;width:37px;text-align:center;font-size:18.5px;line-height:20px;color:#3f3f3f">23</div>
<div class="a" style="left:0px;top:1012px;width:37px;text-align:center;font-size:18.5px;line-height:20px;color:#3f3f3f">24</div>
<div class="a" style="left:0px;top:1042px;width:37px;text-align:center;font-size:18.5px;line-height:20px;color:#3f3f3f">25</div>
<div class="a" style="left:37px;top:346px;width:1217px;height:30px;background:#8F9EAF"></div>
<div class="a" style="left:155px;top:346px;width:1px;height:30px;background:rgba(255,255,255,0.18)"></div>
<div class="a" style="left:336px;top:346px;width:1px;height:30px;background:rgba(255,255,255,0.18)"></div>
<div class="a" style="left:645px;top:346px;width:1px;height:30px;background:rgba(255,255,255,0.18)"></div>
<div class="a" style="left:827px;top:346px;width:1px;height:30px;background:rgba(255,255,255,0.18)"></div>
<div class="a" style="left:987px;top:346px;width:1px;height:30px;background:rgba(255,255,255,0.18)"></div>
<div class="a" style="left:1147px;top:346px;width:1px;height:30px;background:rgba(255,255,255,0.18)"></div>
<div class="a" style="left:37px;top:346px;width:1217px;height:1px;background:rgba(255,255,255,0.22)"></div>
<div class="a" style="left:41px;top:351px;font-size:19.5px;line-height:22px;color:#141414">Sales</div>
<div class="a" style="left:158px;top:351px;font-size:19.5px;line-height:22px;color:#141414">John Smith</div>
<div class="a" style="left:339px;top:351px;font-size:19.5px;line-height:22px;color:#141414">john.smith@acme.com</div>
<div class="a" style="left:648px;top:351px;font-size:19.5px;line-height:22px;color:#141414">+1-415-555-0101</div>
<div class="a" style="left:830px;top:351px;font-size:19.5px;line-height:22px;color:#141414">Acme Inc</div>
<div class="a" style="left:990px;top:351px;font-size:19.5px;line-height:22px;color:#141414">San Francisco</div>
<div class="a" style="left:1150px;top:351px;font-size:19.5px;line-height:22px;color:#141414">CA</div>
<div class="a" style="left:37px;top:376px;width:1217px;height:30px;background:#AAB1BB"></div>
<div class="a" style="left:155px;top:376px;width:1px;height:30px;background:rgba(255,255,255,0.18)"></div>
<div class="a" style="left:336px;top:376px;width:1px;height:30px;background:rgba(255,255,255,0.18)"></div>
<div class="a" style="left:645px;top:376px;width:1px;height:30px;background:rgba(255,255,255,0.18)"></div>
<div class="a" style="left:827px;top:376px;width:1px;height:30px;background:rgba(255,255,255,0.18)"></div>
<div class="a" style="left:987px;top:376px;width:1px;height:30px;background:rgba(255,255,255,0.18)"></div>
<div class="a" style="left:1147px;top:376px;width:1px;height:30px;background:rgba(255,255,255,0.18)"></div>
<div class="a" style="left:37px;top:376px;width:1217px;height:1px;background:rgba(255,255,255,0.22)"></div>
<div class="a" style="left:41px;top:381px;font-size:19.5px;line-height:22px;color:#141414">Sales</div>
<div class="a" style="left:158px;top:381px;font-size:19.5px;line-height:22px;color:#141414">Emily Davis</div>
<div class="a" style="left:339px;top:381px;font-size:19.5px;line-height:22px;color:#141414">emily.davis@brightco.com</div>
<div class="a" style="left:648px;top:381px;font-size:19.5px;line-height:22px;color:#141414">+1-212-555-0199</div>
<div class="a" style="left:830px;top:381px;font-size:19.5px;line-height:22px;color:#141414">BrightCo</div>
<div class="a" style="left:990px;top:381px;font-size:19.5px;line-height:22px;color:#141414">New York City</div>
<div class="a" style="left:1150px;top:381px;font-size:19.5px;line-height:22px;color:#141414">NY</div>
<div class="a" style="left:37px;top:406px;width:1217px;height:30px;background:#8F9EAF"></div>
<div class="a" style="left:155px;top:406px;width:1px;height:30px;background:rgba(255,255,255,0.18)"></div>
<div class="a" style="left:336px;top:406px;width:1px;height:30px;background:rgba(255,255,255,0.18)"></div>
<div class="a" style="left:645px;top:406px;width:1px;height:30px;background:rgba(255,255,255,0.18)"></div>
<div class="a" style="left:827px;top:406px;width:1px;height:30px;background:rgba(255,255,255,0.18)"></div>
<div class="a" style="left:987px;top:406px;width:1px;height:30px;background:rgba(255,255,255,0.18)"></div>
<div class="a" style="left:1147px;top:406px;width:1px;height:30px;background:rgba(255,255,255,0.18)"></div>
<div class="a" style="left:37px;top:406px;width:1217px;height:1px;background:rgba(255,255,255,0.22)"></div>
<div class="a" style="left:41px;top:411px;font-size:19.5px;line-height:22px;color:#141414">Sales</div>
<div class="a" style="left:158px;top:411px;font-size:19.5px;line-height:22px;color:#141414">John Smith</div>
<div class="a" style="left:339px;top:411px;font-size:19.5px;line-height:22px;color:#141414">john.smith@acme.com</div>
<div class="a" style="left:648px;top:411px;font-size:19.5px;line-height:22px;color:#141414">+1-415-555-0101</div>
<div class="a" style="left:830px;top:411px;font-size:19.5px;line-height:22px;color:#141414">Acme Inc</div>
<div class="a" style="left:990px;top:411px;font-size:19.5px;line-height:22px;color:#141414">San Francisco</div>
<div class="a" style="left:1150px;top:411px;font-size:19.5px;line-height:22px;color:#141414">CA</div>
<div class="a" style="left:37px;top:436px;width:1217px;height:30px;background:#AAB1BB"></div>
<div class="a" style="left:155px;top:436px;width:1px;height:30px;background:rgba(255,255,255,0.18)"></div>
<div class="a" style="left:336px;top:436px;width:1px;height:30px;background:rgba(255,255,255,0.18)"></div>
<div class="a" style="left:645px;top:436px;width:1px;height:30px;background:rgba(255,255,255,0.18)"></div>
<div class="a" style="left:827px;top:436px;width:1px;height:30px;background:rgba(255,255,255,0.18)"></div>
<div class="a" style="left:987px;top:436px;width:1px;height:30px;background:rgba(255,255,255,0.18)"></div>
<div class="a" style="left:1147px;top:436px;width:1px;height:30px;background:rgba(255,255,255,0.18)"></div>
<div class="a" style="left:37px;top:436px;width:1217px;height:1px;background:rgba(255,255,255,0.22)"></div>
<div class="a" style="left:41px;top:441px;font-size:19.5px;line-height:22px;color:#141414">Sales</div>
<div class="a" style="left:158px;top:441px;font-size:19.5px;line-height:22px;color:#141414">John Smith</div>
<div class="a" style="left:339px;top:441px;font-size:19.5px;line-height:22px;color:#141414">john.smith@acme.com</div>
<div class="a" style="left:648px;top:441px;font-size:19.5px;line-height:22px;color:#141414">+1-415-555-0102</div>
<div class="a" style="left:830px;top:441px;font-size:19.5px;line-height:22px;color:#141414">Acme Inc</div>
<div class="a" style="left:990px;top:441px;font-size:19.5px;line-height:22px;color:#141414">San Francisco</div>
<div class="a" style="left:1150px;top:441px;font-size:19.5px;line-height:22px;color:#141414">CA</div>
<div class="a" style="left:37px;top:466px;width:1217px;height:30px;background:#8F9EAF"></div>
<div class="a" style="left:155px;top:466px;width:1px;height:30px;background:rgba(255,255,255,0.18)"></div>
<div class="a" style="left:336px;top:466px;width:1px;height:30px;background:rgba(255,255,255,0.18)"></div>
<div class="a" style="left:645px;top:466px;width:1px;height:30px;background:rgba(255,255,255,0.18)"></div>
<div class="a" style="left:827px;top:466px;width:1px;height:30px;background:rgba(255,255,255,0.18)"></div>
<div class="a" style="left:987px;top:466px;width:1px;height:30px;background:rgba(255,255,255,0.18)"></div>
<div class="a" style="left:1147px;top:466px;width:1px;height:30px;background:rgba(255,255,255,0.18)"></div>
<div class="a" style="left:37px;top:466px;width:1217px;height:1px;background:rgba(255,255,255,0.22)"></div>
<div class="a" style="left:41px;top:471px;font-size:19.5px;line-height:22px;color:#141414">Sales</div>
<div class="a" style="left:158px;top:471px;font-size:19.5px;line-height:22px;color:#141414">Michael Lee</div>
<div class="a" style="left:339px;top:471px;font-size:19.5px;line-height:22px;color:#141414">michael.lee@northwind.com</div>
<div class="a" style="left:648px;top:471px;font-size:19.5px;line-height:22px;color:#141414">+1-206-555-0147</div>
<div class="a" style="left:830px;top:471px;font-size:19.5px;line-height:22px;color:#141414">Northwind</div>
<div class="a" style="left:990px;top:471px;font-size:19.5px;line-height:22px;color:#141414">Seattle</div>
<div class="a" style="left:1150px;top:471px;font-size:19.5px;line-height:22px;color:#141414">WA</div>
<div class="a" style="left:37px;top:496px;width:1217px;height:30px;background:#C8BE9D"></div>
<div class="a" style="left:155px;top:496px;width:1px;height:30px;background:rgba(255,255,255,0.18)"></div>
<div class="a" style="left:336px;top:496px;width:1px;height:30px;background:rgba(255,255,255,0.18)"></div>
<div class="a" style="left:645px;top:496px;width:1px;height:30px;background:rgba(255,255,255,0.18)"></div>
<div class="a" style="left:827px;top:496px;width:1px;height:30px;background:rgba(255,255,255,0.18)"></div>
<div class="a" style="left:987px;top:496px;width:1px;height:30px;background:rgba(255,255,255,0.18)"></div>
<div class="a" style="left:1147px;top:496px;width:1px;height:30px;background:rgba(255,255,255,0.18)"></div>
<div class="a" style="left:37px;top:496px;width:1217px;height:1px;background:rgba(255,255,255,0.22)"></div>
<div class="a" style="left:41px;top:501px;font-size:19.5px;line-height:22px;color:#744C0C;font-weight:bold">Dept</div>
<div class="a" style="left:158px;top:501px;font-size:19.5px;line-height:22px;color:#744C0C;font-weight:bold">Name</div>
<div class="a" style="left:339px;top:501px;font-size:19.5px;line-height:22px;color:#744C0C;font-weight:bold">Email</div>
<div class="a" style="left:648px;top:501px;font-size:19.5px;line-height:22px;color:#744C0C;font-weight:bold">Phone Number</div>
<div class="a" style="left:830px;top:501px;font-size:19.5px;line-height:22px;color:#744C0C;font-weight:bold">Company</div>
<div class="a" style="left:990px;top:501px;font-size:19.5px;line-height:22px;color:#744C0C;font-weight:bold">City</div>
<div class="a" style="left:1150px;top:501px;font-size:19.5px;line-height:22px;color:#744C0C;font-weight:bold">State</div>
<div class="a" style="left:37px;top:526px;width:1217px;height:30px;background:#8F9EAF"></div>
<div class="a" style="left:155px;top:526px;width:1px;height:30px;background:rgba(255,255,255,0.18)"></div>
<div class="a" style="left:336px;top:526px;width:1px;height:30px;background:rgba(255,255,255,0.18)"></div>
<div class="a" style="left:645px;top:526px;width:1px;height:30px;background:rgba(255,255,255,0.18)"></div>
<div class="a" style="left:827px;top:526px;width:1px;height:30px;background:rgba(255,255,255,0.18)"></div>
<div class="a" style="left:987px;top:526px;width:1px;height:30px;background:rgba(255,255,255,0.18)"></div>
<div class="a" style="left:1147px;top:526px;width:1px;height:30px;background:rgba(255,255,255,0.18)"></div>
<div class="a" style="left:37px;top:526px;width:1217px;height:1px;background:rgba(255,255,255,0.22)"></div>
<div class="a" style="left:41px;top:531px;font-size:19.5px;line-height:22px;color:#141414">Marketing</div>
<div class="a" style="left:158px;top:531px;font-size:19.5px;line-height:22px;color:#141414">Sophia Brown</div>
<div class="a" style="left:339px;top:531px;font-size:19.5px;line-height:22px;color:#141414">sophia.brown@contoso.com</div>
<div class="a" style="left:648px;top:531px;font-size:19.5px;line-height:22px;color:#141414">+1-305-555-0110</div>
<div class="a" style="left:830px;top:531px;font-size:19.5px;line-height:22px;color:#141414">Contoso</div>
<div class="a" style="left:990px;top:531px;font-size:19.5px;line-height:22px;color:#141414">Miami</div>
<div class="a" style="left:1150px;top:531px;font-size:19.5px;line-height:22px;color:#141414">FL</div>
<div class="a" style="left:37px;top:556px;width:1217px;height:30px;background:#AAB1BB"></div>
<div class="a" style="left:155px;top:556px;width:1px;height:30px;background:rgba(255,255,255,0.18)"></div>
<div class="a" style="left:336px;top:556px;width:1px;height:30px;background:rgba(255,255,255,0.18)"></div>
<div class="a" style="left:645px;top:556px;width:1px;height:30px;background:rgba(255,255,255,0.18)"></div>
<div class="a" style="left:827px;top:556px;width:1px;height:30px;background:rgba(255,255,255,0.18)"></div>
<div class="a" style="left:987px;top:556px;width:1px;height:30px;background:rgba(255,255,255,0.18)"></div>
<div class="a" style="left:1147px;top:556px;width:1px;height:30px;background:rgba(255,255,255,0.18)"></div>
<div class="a" style="left:37px;top:556px;width:1217px;height:1px;background:rgba(255,255,255,0.22)"></div>
<div class="a" style="left:41px;top:561px;font-size:19.5px;line-height:22px;color:#141414">Marketing</div>
<div class="a" style="left:158px;top:561px;font-size:19.5px;line-height:22px;color:#141414">Emily Davis</div>
<div class="a" style="left:339px;top:561px;font-size:19.5px;line-height:22px;color:#141414">emily.davis@brightco.com</div>
<div class="a" style="left:648px;top:561px;font-size:19.5px;line-height:22px;color:#141414">+1-212-555-0199</div>
<div class="a" style="left:830px;top:561px;font-size:19.5px;line-height:22px;color:#141414">BrightCo</div>
<div class="a" style="left:990px;top:561px;font-size:19.5px;line-height:22px;color:#141414">New York City</div>
<div class="a" style="left:1150px;top:561px;font-size:19.5px;line-height:22px;color:#141414">NY</div>
<div class="a" style="left:37px;top:586px;width:1217px;height:30px;background:#8F9EAF"></div>
<div class="a" style="left:155px;top:586px;width:1px;height:30px;background:rgba(255,255,255,0.18)"></div>
<div class="a" style="left:336px;top:586px;width:1px;height:30px;background:rgba(255,255,255,0.18)"></div>
<div class="a" style="left:645px;top:586px;width:1px;height:30px;background:rgba(255,255,255,0.18)"></div>
<div class="a" style="left:827px;top:586px;width:1px;height:30px;background:rgba(255,255,255,0.18)"></div>
<div class="a" style="left:987px;top:586px;width:1px;height:30px;background:rgba(255,255,255,0.18)"></div>
<div class="a" style="left:1147px;top:586px;width:1px;height:30px;background:rgba(255,255,255,0.18)"></div>
<div class="a" style="left:37px;top:586px;width:1217px;height:1px;background:rgba(255,255,255,0.22)"></div>
<div class="a" style="left:41px;top:591px;font-size:19.5px;line-height:22px;color:#141414">Marketing</div>
<div class="a" style="left:158px;top:591px;font-size:19.5px;line-height:22px;color:#141414">Ethan Johnson</div>
<div class="a" style="left:339px;top:591px;font-size:19.5px;line-height:22px;color:#141414">ethan.johnson@tailspin.com</div>
<div class="a" style="left:648px;top:591px;font-size:19.5px;line-height:22px;color:#141414">+1-512-555-0123</div>
<div class="a" style="left:830px;top:591px;font-size:19.5px;line-height:22px;color:#141414">Tailspin Toys</div>
<div class="a" style="left:990px;top:591px;font-size:19.5px;line-height:22px;color:#141414">Austin</div>
<div class="a" style="left:1150px;top:591px;font-size:19.5px;line-height:22px;color:#141414">TX</div>
<div class="a" style="left:37px;top:616px;width:1217px;height:30px;background:#AAB1BB"></div>
<div class="a" style="left:155px;top:616px;width:1px;height:30px;background:rgba(255,255,255,0.18)"></div>
<div class="a" style="left:336px;top:616px;width:1px;height:30px;background:rgba(255,255,255,0.18)"></div>
<div class="a" style="left:645px;top:616px;width:1px;height:30px;background:rgba(255,255,255,0.18)"></div>
<div class="a" style="left:827px;top:616px;width:1px;height:30px;background:rgba(255,255,255,0.18)"></div>
<div class="a" style="left:987px;top:616px;width:1px;height:30px;background:rgba(255,255,255,0.18)"></div>
<div class="a" style="left:1147px;top:616px;width:1px;height:30px;background:rgba(255,255,255,0.18)"></div>
<div class="a" style="left:37px;top:616px;width:1217px;height:1px;background:rgba(255,255,255,0.22)"></div>
<div class="a" style="left:41px;top:621px;font-size:19.5px;line-height:22px;color:#141414">Marketing</div>
<div class="a" style="left:158px;top:621px;font-size:19.5px;line-height:22px;color:#141414">John Smith</div>
<div class="a" style="left:339px;top:621px;font-size:19.5px;line-height:22px;color:#141414">john.smith@acme.com</div>
<div class="a" style="left:648px;top:621px;font-size:19.5px;line-height:22px;color:#141414">+1-415-555-0101</div>
<div class="a" style="left:830px;top:621px;font-size:19.5px;line-height:22px;color:#141414">Acme Inc</div>
<div class="a" style="left:990px;top:621px;font-size:19.5px;line-height:22px;color:#141414">San Francisco</div>
<div class="a" style="left:1150px;top:621px;font-size:19.5px;line-height:22px;color:#141414">CA</div>
<div class="a" style="left:37px;top:646px;width:1217px;height:30px;background:#C8BE9D"></div>
<div class="a" style="left:155px;top:646px;width:1px;height:30px;background:rgba(255,255,255,0.18)"></div>
<div class="a" style="left:336px;top:646px;width:1px;height:30px;background:rgba(255,255,255,0.18)"></div>
<div class="a" style="left:645px;top:646px;width:1px;height:30px;background:rgba(255,255,255,0.18)"></div>
<div class="a" style="left:827px;top:646px;width:1px;height:30px;background:rgba(255,255,255,0.18)"></div>
<div class="a" style="left:987px;top:646px;width:1px;height:30px;background:rgba(255,255,255,0.18)"></div>
<div class="a" style="left:1147px;top:646px;width:1px;height:30px;background:rgba(255,255,255,0.18)"></div>
<div class="a" style="left:37px;top:646px;width:1217px;height:1px;background:rgba(255,255,255,0.22)"></div>
<div class="a" style="left:41px;top:651px;font-size:19.5px;line-height:22px;color:#744C0C;font-weight:bold">Dept</div>
<div class="a" style="left:158px;top:651px;font-size:19.5px;line-height:22px;color:#744C0C;font-weight:bold">Name</div>
<div class="a" style="left:339px;top:651px;font-size:19.5px;line-height:22px;color:#744C0C;font-weight:bold">Email</div>
<div class="a" style="left:648px;top:651px;font-size:19.5px;line-height:22px;color:#744C0C;font-weight:bold">Phone Number</div>
<div class="a" style="left:830px;top:651px;font-size:19.5px;line-height:22px;color:#744C0C;font-weight:bold">Company</div>
<div class="a" style="left:990px;top:651px;font-size:19.5px;line-height:22px;color:#744C0C;font-weight:bold">City</div>
<div class="a" style="left:1150px;top:651px;font-size:19.5px;line-height:22px;color:#744C0C;font-weight:bold">State</div>
<div class="a" style="left:37px;top:676px;width:1217px;height:30px;background:#AAB1BB"></div>
<div class="a" style="left:155px;top:676px;width:1px;height:30px;background:rgba(255,255,255,0.18)"></div>
<div class="a" style="left:336px;top:676px;width:1px;height:30px;background:rgba(255,255,255,0.18)"></div>
<div class="a" style="left:645px;top:676px;width:1px;height:30px;background:rgba(255,255,255,0.18)"></div>
<div class="a" style="left:827px;top:676px;width:1px;height:30px;background:rgba(255,255,255,0.18)"></div>
<div class="a" style="left:987px;top:676px;width:1px;height:30px;background:rgba(255,255,255,0.18)"></div>
<div class="a" style="left:1147px;top:676px;width:1px;height:30px;background:rgba(255,255,255,0.18)"></div>
<div class="a" style="left:37px;top:676px;width:1217px;height:1px;background:rgba(255,255,255,0.22)"></div>
<div class="a" style="left:41px;top:681px;font-size:19.5px;line-height:22px;color:#141414">Support</div>
<div class="a" style="left:158px;top:681px;font-size:19.5px;line-height:22px;color:#141414">Olivia Martinez</div>
<div class="a" style="left:339px;top:681px;font-size:19.5px;line-height:22px;color:#141414">olivia.martinez@wingtip.com</div>
<div class="a" style="left:648px;top:681px;font-size:19.5px;line-height:22px;color:#141414">+1-702-555-0160</div>
<div class="a" style="left:830px;top:681px;font-size:19.5px;line-height:22px;color:#141414">Wingtip</div>
<div class="a" style="left:990px;top:681px;font-size:19.5px;line-height:22px;color:#141414">Las Vegas</div>
<div class="a" style="left:1150px;top:681px;font-size:19.5px;line-height:22px;color:#141414">NV</div>
<div class="a" style="left:37px;top:706px;width:1217px;height:30px;background:#8F9EAF"></div>
<div class="a" style="left:155px;top:706px;width:1px;height:30px;background:rgba(255,255,255,0.18)"></div>
<div class="a" style="left:336px;top:706px;width:1px;height:30px;background:rgba(255,255,255,0.18)"></div>
<div class="a" style="left:645px;top:706px;width:1px;height:30px;background:rgba(255,255,255,0.18)"></div>
<div class="a" style="left:827px;top:706px;width:1px;height:30px;background:rgba(255,255,255,0.18)"></div>
<div class="a" style="left:987px;top:706px;width:1px;height:30px;background:rgba(255,255,255,0.18)"></div>
<div class="a" style="left:1147px;top:706px;width:1px;height:30px;background:rgba(255,255,255,0.18)"></div>
<div class="a" style="left:37px;top:706px;width:1217px;height:1px;background:rgba(255,255,255,0.22)"></div>
<div class="a" style="left:41px;top:711px;font-size:19.5px;line-height:22px;color:#141414">Support</div>
<div class="a" style="left:158px;top:711px;font-size:19.5px;line-height:22px;color:#141414">John Smith</div>
<div class="a" style="left:339px;top:711px;font-size:19.5px;line-height:22px;color:#141414">john.smith@acme.com</div>
<div class="a" style="left:648px;top:711px;font-size:19.5px;line-height:22px;color:#141414">+1-415-555-0101</div>
<div class="a" style="left:830px;top:711px;font-size:19.5px;line-height:22px;color:#141414">Acme Inc</div>
<div class="a" style="left:990px;top:711px;font-size:19.5px;line-height:22px;color:#141414">San Francisco</div>
<div class="a" style="left:1150px;top:711px;font-size:19.5px;line-height:22px;color:#141414">CA</div>
<div class="a" style="left:37px;top:736px;width:1217px;height:30px;background:#AAB1BB"></div>
<div class="a" style="left:155px;top:736px;width:1px;height:30px;background:rgba(255,255,255,0.18)"></div>
<div class="a" style="left:336px;top:736px;width:1px;height:30px;background:rgba(255,255,255,0.18)"></div>
<div class="a" style="left:645px;top:736px;width:1px;height:30px;background:rgba(255,255,255,0.18)"></div>
<div class="a" style="left:827px;top:736px;width:1px;height:30px;background:rgba(255,255,255,0.18)"></div>
<div class="a" style="left:987px;top:736px;width:1px;height:30px;background:rgba(255,255,255,0.18)"></div>
<div class="a" style="left:1147px;top:736px;width:1px;height:30px;background:rgba(255,255,255,0.18)"></div>
<div class="a" style="left:37px;top:736px;width:1217px;height:1px;background:rgba(255,255,255,0.22)"></div>
<div class="a" style="left:41px;top:741px;font-size:19.5px;line-height:22px;color:#141414">Support</div>
<div class="a" style="left:158px;top:741px;font-size:19.5px;line-height:22px;color:#141414">John Smith</div>
<div class="a" style="left:339px;top:741px;font-size:19.5px;line-height:22px;color:#141414">john.smith@acme.com</div>
<div class="a" style="left:648px;top:741px;font-size:19.5px;line-height:22px;color:#141414">+1-415-555-0103</div>
<div class="a" style="left:830px;top:741px;font-size:19.5px;line-height:22px;color:#141414">Acme Inc</div>
<div class="a" style="left:990px;top:741px;font-size:19.5px;line-height:22px;color:#141414">San Francisco</div>
<div class="a" style="left:1150px;top:741px;font-size:19.5px;line-height:22px;color:#141414">CA</div>
<div class="a" style="left:37px;top:316px;width:1217px;height:30px;background:#1A3F62"></div>
<div class="a" style="left:37px;top:321px;width:118px;text-align:center;font-size:19.5px;line-height:22px;color:#E6EAF0;font-weight:bold;overflow:hidden">Dept</div>
<div class="a" style="left:132px;top:323px;width:22px;height:22px;background:#FFFFFF"></div>
<svg style="left:138px;top:332px;" width="10" height="6" viewBox="0 0 10 6"><path d="M0 0 H10 L5 5 Z" fill="#555"/></svg>
<div class="a" style="left:155px;top:316px;width:1px;height:30px;background:rgba(255,255,255,0.10)"></div>
<div class="a" style="left:155px;top:321px;width:181px;text-align:center;font-size:19.5px;line-height:22px;color:#E6EAF0;font-weight:bold;overflow:hidden">Name</div>
<div class="a" style="left:313px;top:323px;width:22px;height:22px;background:#D4D4D4"></div>
<svg style="left:319px;top:332px;" width="10" height="6" viewBox="0 0 10 6"><path d="M0 0 H10 L5 5 Z" fill="#555"/></svg>
<div class="a" style="left:336px;top:316px;width:1px;height:30px;background:rgba(255,255,255,0.10)"></div>
<div class="a" style="left:336px;top:321px;width:309px;text-align:center;font-size:19.5px;line-height:22px;color:#E6EAF0;font-weight:bold;overflow:hidden">Email</div>
<div class="a" style="left:622px;top:323px;width:22px;height:22px;background:#D4D4D4"></div>
<svg style="left:628px;top:332px;" width="10" height="6" viewBox="0 0 10 6"><path d="M0 0 H10 L5 5 Z" fill="#555"/></svg>
<div class="a" style="left:645px;top:316px;width:1px;height:30px;background:rgba(255,255,255,0.10)"></div>
<div class="a" style="left:645px;top:321px;width:182px;text-align:center;font-size:19.5px;line-height:22px;color:#E6EAF0;font-weight:bold;overflow:hidden">Phone Number</div>
<div class="a" style="left:804px;top:323px;width:22px;height:22px;background:#D4D4D4"></div>
<svg style="left:810px;top:332px;" width="10" height="6" viewBox="0 0 10 6"><path d="M0 0 H10 L5 5 Z" fill="#555"/></svg>
<div class="a" style="left:827px;top:316px;width:1px;height:30px;background:rgba(255,255,255,0.10)"></div>
<div class="a" style="left:827px;top:321px;width:160px;text-align:center;font-size:19.5px;line-height:22px;color:#E6EAF0;font-weight:bold;overflow:hidden">Company</div>
<div class="a" style="left:964px;top:323px;width:22px;height:22px;background:#D4D4D4"></div>
<svg style="left:970px;top:332px;" width="10" height="6" viewBox="0 0 10 6"><path d="M0 0 H10 L5 5 Z" fill="#555"/></svg>
<div class="a" style="left:987px;top:316px;width:1px;height:30px;background:rgba(255,255,255,0.10)"></div>
<div class="a" style="left:987px;top:321px;width:160px;text-align:center;font-size:19.5px;line-height:22px;color:#E6EAF0;font-weight:bold;overflow:hidden">City</div>
<div class="a" style="left:1124px;top:323px;width:22px;height:22px;background:#D4D4D4"></div>
<svg style="left:1130px;top:332px;" width="10" height="6" viewBox="0 0 10 6"><path d="M0 0 H10 L5 5 Z" fill="#555"/></svg>
<div class="a" style="left:1147px;top:316px;width:1px;height:30px;background:rgba(255,255,255,0.10)"></div>
<div class="a" style="left:1147px;top:321px;width:107px;text-align:center;font-size:19.5px;line-height:22px;color:#E6EAF0;font-weight:bold;overflow:hidden">State</div>
<div class="a" style="left:1231px;top:323px;width:22px;height:22px;background:#D4D4D4"></div>
<svg style="left:1237px;top:332px;" width="10" height="6" viewBox="0 0 10 6"><path d="M0 0 H10 L5 5 Z" fill="#555"/></svg>
<div class="a" style="left:36px;top:315px;width:1219px;height:452px;border:2px solid #1E7145"></div>
<div class="a" style="left:1251px;top:763px;width:6px;height:6px;background:#1E7145;box-shadow:0 0 0 1px rgba(255,255,255,0.6)"></div>
<div class="a" style="left:1894px;top:288px;width:26px;height:776px;background:#F5F5F5"></div>
<svg style="left:1901px;top:292px;" width="13" height="9" viewBox="0 0 13 9"><path d="M0.5 8 L6.5 1 L12.5 8 Z" fill="#6E6E6E" stroke="#6E6E6E" stroke-linejoin="round"/></svg>
<div class="a" style="left:1902px;top:310px;width:11px;height:729px;background:#6E6E6E;border-radius:6px"></div>
<svg style="left:1901px;top:1049px;" width="13" height="9" viewBox="0 0 13 9"><path d="M0.5 1 L6.5 8 L12.5 1 Z" fill="#6E6E6E" stroke="#6E6E6E" stroke-linejoin="round"/></svg>
<div class="a" style="left:1412px;top:232px;width:255px;height:161px;border:5px solid #0750E4;border-top-width:6px;background:#fff;box-shadow:0 2px 4px rgba(0,0,0,0.10)"></div>
<div class="a" style="left:1432px;top:251px;font-size:13.5px;line-height:13.5px;color:#404040;font-weight:bold;">Remove Duplicates</div>
<div class="a" style="left:1432px;top:279px;font-size:13.8px;line-height:13.8px;color:#5a5a5a;font-weight:normal;">Delete duplicate rows from a sheet.</div>
<div class="a" style="left:1432px;top:319px;font-size:13.8px;line-height:13.8px;color:#5a5a5a;font-weight:normal;">You can pick which columns should</div>
<div class="a" style="left:1432px;top:339px;font-size:13.8px;line-height:13.8px;color:#5a5a5a;font-weight:normal;">be checked for duplicate</div>
<div class="a" style="left:1432px;top:359px;font-size:13.8px;line-height:13.8px;color:#5a5a5a;font-weight:normal;">information.</div>
<div class="a" style="left:0px;top:1064px;width:1920px;height:42px;background:#E8EBEE"></div>
<div class="a" style="left:144px;top:1064px;width:207px;height:37px;background:#fff;border-radius:0 0 6px 6px"></div>
<div class="a" style="left:0px;top:1064px;width:144px;height:42px;background:#E8EBEE;border-radius:0 6px 0 0"></div>
<div class="a" style="left:350px;top:1064px;width:1570px;height:42px;background:#E8EBEE;border-radius:6px 0 0 0"></div>
<div class="a" style="left:144px;top:1064px;width:207px;height:37px;background:#fff;border-radius:0 0 6px 6px"></div>
<svg style="left:27px;top:1079px;" width="10" height="13" viewBox="0 0 10 13"><path d="M8 1 L2 6.5 L8 12" fill="none" stroke="#a8a8a8" stroke-width="1.4"/></svg>
<svg style="left:71px;top:1079px;" width="10" height="13" viewBox="0 0 10 13"><path d="M2 1 L8 6.5 L2 12" fill="none" stroke="#333" stroke-width="1.4"/></svg>
<div class="a" style="left:157px;top:1074px;font-size:18px;line-height:18px;color:#303030;font-weight:normal;">Combined_Customers</div>
<div class="a" style="left:154px;top:1094px;width:187px;height:3px;background:#17693A;border-radius:2px"></div>
<div class="a" style="left:376px;top:1078px;font-size:18px;line-height:18px;color:#303030;font-weight:normal;">Inventory_Combined</div>
<div class="a" style="left:585px;top:1078px;font-size:18px;line-height:18px;color:#303030;font-weight:normal;">Duplicate_Finder</div>
<div class="a" style="left:759px;top:1078px;font-size:18px;line-height:18px;color:#303030;font-weight:normal;">COUNTIF_Demo</div>
<div class="a" style="left:929px;top:1078px;font-size:18px;line-height:18px;color:#303030;font-weight:normal;">Screenshot_Ma</div>
<div class="a" style="left:357px;top:1072px;width:1px;height:26px;background:#D2D4D7"></div>
<div class="a" style="left:566px;top:1072px;width:1px;height:26px;background:#D2D4D7"></div>
<div class="a" style="left:740px;top:1072px;width:1px;height:26px;background:#D2D4D7"></div>
<div class="a" style="left:911px;top:1072px;width:1px;height:26px;background:#D2D4D7"></div>
<div class="a" style="left:1052px;top:1070px;width:10px;height:30px;background:#E8EBEE"></div>
<svg style="left:1065px;top:1081px;" width="16" height="6" viewBox="0 0 16 6"><circle cx="2.5" cy="3" r="2" fill="#333"/><circle cx="7.5" cy="3" r="2" fill="#333"/><circle cx="12.5" cy="3" r="2" fill="#333"/></svg>
<svg style="left:1106px;top:1076px;" width="17" height="17" viewBox="0 0 17 17"><path d="M8.5 1 V16 M1 8.5 H16" stroke="#222" stroke-width="1.2"/></svg>
<svg style="left:1155px;top:1077px;" width="6" height="16" viewBox="0 0 6 16"><circle cx="3" cy="2" r="1.6" fill="#444"/><circle cx="3" cy="8" r="1.6" fill="#444"/><circle cx="3" cy="14" r="1.6" fill="#444"/></svg>
<div class="a" style="left:1181px;top:1072px;width:707px;height:24px;background:#F3F3F3;border-radius:12px"></div>
<svg style="left:1187px;top:1079px;" width="10" height="12" viewBox="0 0 10 12"><path d="M8.5 0.8 L1 6 L8.5 11.2 Z" fill="#6E6E6E" stroke="#6E6E6E" stroke-linejoin="round"/></svg>
<div class="a" style="left:1202px;top:1079px;width:657px;height:11px;background:#6E6E6E;border-radius:6px"></div>
<svg style="left:1878px;top:1079px;" width="10" height="12" viewBox="0 0 10 12"><path d="M1.5 0.8 L9 6 L1.5 11.2 Z" fill="#6E6E6E" stroke="#6E6E6E" stroke-linejoin="round"/></svg>
<div class="a" style="left:0px;top:1106px;width:1920px;height:30px;background:#F3F3F3"></div>
<div class="a" style="left:15px;top:1116px;font-size:13.2px;line-height:13.2px;color:#3a3a3a;font-weight:normal;">Ready</div>
<svg style="left:78px;top:1112px;" width="20" height="20" viewBox="0 0 20 20"><circle cx="8.4" cy="3" r="2" fill="none" stroke="#222" stroke-width="1.3"/>
<path d="M2.2 5.8 Q8.5 9.5 16 5.6 M8.3 8.5 C7.5 11 7.5 12 6.8 14 L5 18.6 M7.8 13.5 L9.6 17" fill="none" stroke="#222" stroke-width="3.4" stroke-linecap="round" stroke-linejoin="round"/>
<path d="M2.2 5.8 Q8.5 9.5 16 5.6 M8.3 8.5 C7.5 11 7.5 12 6.8 14 L5 18.6 M7.8 13.5 L9.6 17" fill="none" stroke="#F3F3F3" stroke-width="1.1" stroke-linecap="round" stroke-linejoin="round"/>
<path d="M10.8 10.5 L18.6 18.8 M18.4 10.5 L10.6 18.6" stroke="#333" stroke-width="1.2"/></svg>
<div class="a" style="left:103px;top:1116px;font-size:13.2px;line-height:13.2px;color:#262626;font-weight:bold;">Accessibility: Investigate</div>
<div class="a" style="left:1431px;top:1116px;font-size:13.2px;line-height:13.2px;color:#3a3a3a;font-weight:normal;">Count: 105</div>
<div class="a" style="left:1523px;top:1107px;width:53px;height:29px;background:#E0E0E0"></div>
<svg style="left:1540px;top:1113px;" width="18" height="17" viewBox="0 0 18 17"><path d="M1 1 H17 V16 H1 Z M1 6 H17 M1 11 H17 M6.3 1 V16 M11.6 1 V16" fill="none" stroke="#333" stroke-width="1.4"/></svg>
<svg style="left:1593px;top:1113px;" width="20" height="17" viewBox="0 0 20 17"><rect x="1" y="1" width="18" height="15" fill="none" stroke="#333" stroke-width="1.3"/><rect x="4.5" y="3.5" width="11" height="10" fill="none" stroke="#333" stroke-width="1.2"/><path d="M6.5 6.5 H13.5 M6.5 9 H13.5 M6.5 11.5 H13.5" stroke="#333" stroke-width="1"/></svg>
<svg style="left:1646px;top:1113px;" width="20" height="17" viewBox="0 0 20 17"><rect x="1" y="1" width="18" height="15" fill="none" stroke="#333" stroke-width="1.3"/><path d="M6 1 V8 H14 V1 M10 1 V8" fill="none" stroke="#333" stroke-width="1.3"/></svg>
<div class="a" style="left:1691px;top:1121px;width:10px;height:1.3px;background:#555"></div>
<div class="a" style="left:1709px;top:1121px;width:131px;height:1.3px;background:#666"></div>
<div class="a" style="left:1771px;top:1115px;width:7px;height:14px;background:#555;border-radius:1px"></div>
<svg style="left:1848px;top:1116px;" width="11" height="11" viewBox="0 0 11 11"><path d="M5.5 0 V11 M0 5.5 H11" stroke="#555" stroke-width="1.3"/></svg>
<div class="a" style="left:1876px;top:1116px;font-size:13.2px;line-height:13.2px;color:#3a3a3a;font-weight:normal;">100%</div>
</body></html>
